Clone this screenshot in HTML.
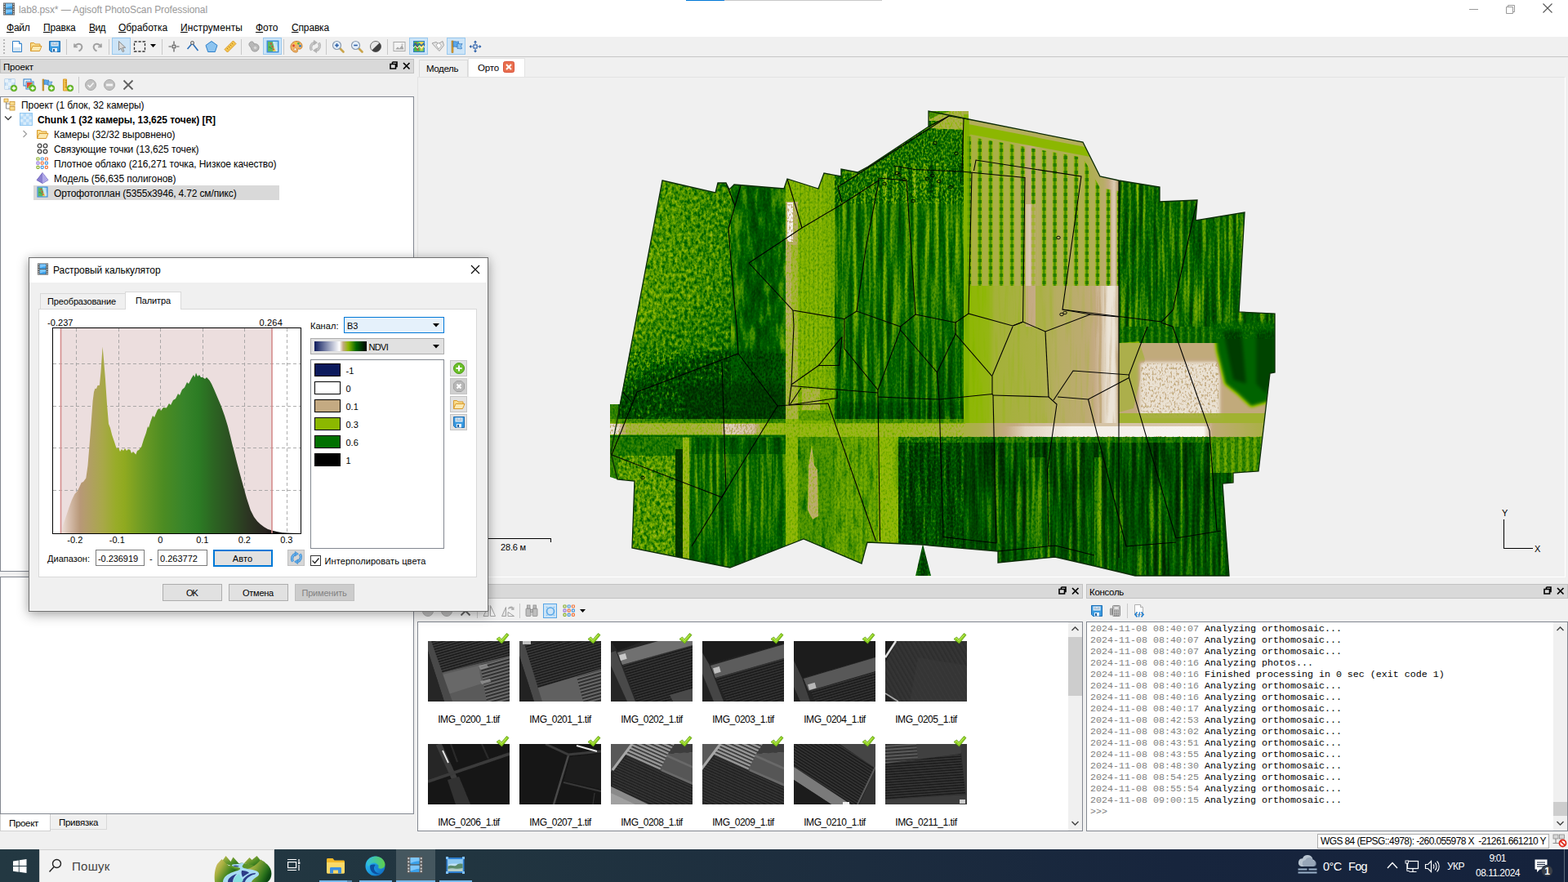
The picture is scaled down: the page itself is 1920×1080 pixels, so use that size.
<!DOCTYPE html>
<html lang="ru"><head><meta charset="utf-8"><title>Agisoft PhotoScan Professional</title><style>html,body{margin:0;padding:0}body{width:1920px;height:1080px;overflow:hidden;position:relative;background:#f0f0f0;font-family:"Liberation Sans",sans-serif;font-size:12px}
.t{position:absolute;white-space:pre;display:block}
svg{overflow:visible}</style></head><body>
<!-- chrome -->
<div style="position:absolute;left:0px;top:0px;width:1920px;height:23px;background:#fff"></div><div style="position:absolute;left:840px;top:0px;width:47px;height:1px;background:#0078d7"></div><div style="position:absolute;left:887px;top:0px;width:193px;height:1px;background:#c8c8c8"></div><svg style="position:absolute;left:3px;top:3px;" width="16" height="16" viewBox="0 0 16 16"><rect x="1" y="0.5" width="14" height="15" fill="#5a5a5a"/><rect x="4" y="1.5" width="8" height="6" fill="#3aa0ea"/><rect x="4" y="8.5" width="8" height="6" fill="#3aa0ea"/><path d="M4 1.5h8v3c-3 0-5 1-8 2z" fill="#8fd0ff" opacity=".8"/><path d="M4 8.5h8v3c-3 0-5 1-8 2z" fill="#8fd0ff" opacity=".8"/><g fill="#d0d0d0"><rect x="1.7" y="1.5" width="1.4" height="1.6"/><rect x="1.7" y="4.5" width="1.4" height="1.6"/><rect x="1.7" y="7.5" width="1.4" height="1.6"/><rect x="1.7" y="10.5" width="1.4" height="1.6"/><rect x="1.7" y="13" width="1.4" height="1.6"/><rect x="12.9" y="1.5" width="1.4" height="1.6"/><rect x="12.9" y="4.5" width="1.4" height="1.6"/><rect x="12.9" y="7.5" width="1.4" height="1.6"/><rect x="12.9" y="10.5" width="1.4" height="1.6"/><rect x="12.9" y="13" width="1.4" height="1.6"/></g></svg><span class="t" style="left:23.00px;top:5px;height:14px;line-height:14px;font-size:12px;color:#999;letter-spacing:-0.107px;">lab8.psx* — Agisoft PhotoScan Professional</span><svg style="position:absolute;left:1798px;top:4px;" width="14" height="14" viewBox="0 0 14 14"><path d="M1 7.5h11" stroke="#999" stroke-width="1"/></svg><svg style="position:absolute;left:1843px;top:4px;" width="14" height="14" viewBox="0 0 14 14"><path d="M1.5 4.5h8v8h-8zM3.5 4.5v-2h8v8h-2" fill="none" stroke="#999" stroke-width="1"/></svg><svg style="position:absolute;left:1888px;top:3px;" width="14" height="14" viewBox="0 0 14 14"><path d="M1.5 1.5l11 11M12.5 1.5l-11 11" stroke="#555" stroke-width="1.1" fill="none"/></svg><div style="position:absolute;left:0px;top:23px;width:1920px;height:22px;background:#fff"></div><span class="t" style="left:8.00px;top:27px;height:14px;line-height:14px;font-size:12px;color:#000;letter-spacing:-0.254px;"><u>Ф</u>айл</span><span class="t" style="left:53.00px;top:27px;height:14px;line-height:14px;font-size:12px;color:#000;letter-spacing:-0.174px;"><u>П</u>равка</span><span class="t" style="left:109.00px;top:27px;height:14px;line-height:14px;font-size:12px;color:#000;letter-spacing:-0.573px;"><u>В</u>ид</span><span class="t" style="left:145.00px;top:27px;height:14px;line-height:14px;font-size:12px;color:#000;letter-spacing:-0.059px;"><u>О</u>бработка</span><span class="t" style="left:221.00px;top:27px;height:14px;line-height:14px;font-size:12px;color:#000;letter-spacing:0.107px;"><u>И</u>нструменты</span><span class="t" style="left:313.00px;top:27px;height:14px;line-height:14px;font-size:12px;color:#000;letter-spacing:-0.020px;"><u>Ф</u>ото</span><span class="t" style="left:357.00px;top:27px;height:14px;line-height:14px;font-size:12px;color:#000;letter-spacing:-0.154px;"><u>С</u>правка</span><div style="position:absolute;left:0px;top:45px;width:1920px;height:25px;background:#f0f0f0;border-bottom:1px solid #c6c6c6;box-sizing:border-box"></div><svg style="position:absolute;left:3px;top:47px;" width="4" height="20" viewBox="0 0 4 20"><g fill="#b8b8b8"><rect x="1" y="1" width="2" height="2"/><rect x="1" y="5" width="2" height="2"/><rect x="1" y="9" width="2" height="2"/><rect x="1" y="13" width="2" height="2"/><rect x="1" y="17" width="2" height="2"/></g></svg><div style="position:absolute;left:137px;top:46px;width:23px;height:21px;background:#cce4f7;border:1px solid #99c9ef;box-sizing:border-box"></div><div style="position:absolute;left:322px;top:46px;width:23px;height:21px;background:#cce4f7;border:1px solid #99c9ef;box-sizing:border-box"></div><div style="position:absolute;left:501px;top:46px;width:23px;height:21px;background:#cce4f7;border:1px solid #99c9ef;box-sizing:border-box"></div><div style="position:absolute;left:547px;top:46px;width:23px;height:21px;background:#cce4f7;border:1px solid #99c9ef;box-sizing:border-box"></div><div style="position:absolute;left:81px;top:48px;width:1px;height:19px;background:#c8c8c8"></div><div style="position:absolute;left:133px;top:48px;width:1px;height:19px;background:#c8c8c8"></div><div style="position:absolute;left:198px;top:48px;width:1px;height:19px;background:#c8c8c8"></div><div style="position:absolute;left:295px;top:48px;width:1px;height:19px;background:#c8c8c8"></div><div style="position:absolute;left:347px;top:48px;width:1px;height:19px;background:#c8c8c8"></div><div style="position:absolute;left:399px;top:48px;width:1px;height:19px;background:#c8c8c8"></div><div style="position:absolute;left:474px;top:48px;width:1px;height:19px;background:#c8c8c8"></div><svg style="position:absolute;left:13px;top:49px;" width="16" height="16" viewBox="0 0 16 16"><path d="M2.5 1.5h8l3 3v10h-11z" fill="#fff" stroke="#2e7fc9"/><path d="M10.5 1.5v3h3" fill="#d6e9f8" stroke="#2e7fc9"/><rect x="3.5" y="9" width="9" height="5" fill="#cfe3f3"/></svg><svg style="position:absolute;left:36px;top:49px;" width="16" height="16" viewBox="0 0 16 16"><path d="M1.5 13.5v-10h4l1.5 1.5h6v2" fill="#f9dc8c" stroke="#d99a2b"/><path d="M1.5 13.5l2.5-6h11l-2.5 6z" fill="#fbe9b0" stroke="#d99a2b"/></svg><svg style="position:absolute;left:59px;top:49px;" width="16" height="16" viewBox="0 0 16 16"><path d="M1.5 1.5h13v13h-11l-2-2z" fill="#3b9be0" stroke="#1f6fb5"/><rect x="3.5" y="2.5" width="9" height="5" fill="#e8f2fb"/><path d="M4.5 4h3M8.5 4h3M4.5 5.7h7" stroke="#7a9bb8" stroke-width=".8"/><rect x="5" y="10" width="6" height="4.5" fill="#e8f2fb"/><rect x="6" y="11" width="2" height="3" fill="#2a5f94"/></svg><svg style="position:absolute;left:88px;top:49px;" width="16" height="16" viewBox="0 0 16 16"><path d="M3 4.5v4h4" fill="none" stroke="#a0a0a0" stroke-width="1.6"/><path d="M3.5 8C5 5 9 3.5 11.5 6c2 2.5 0.5 6-3 7.5" fill="none" stroke="#a0a0a0" stroke-width="2"/></svg><svg style="position:absolute;left:111px;top:49px;" width="16" height="16" viewBox="0 0 16 16"><path d="M13 4.5v4h-4" fill="none" stroke="#a0a0a0" stroke-width="1.6"/><path d="M12.5 8C11 5 7 3.5 4.5 6c-2 2.5-0.5 6 3 7.5" fill="none" stroke="#a0a0a0" stroke-width="2"/></svg><svg style="position:absolute;left:141px;top:49px;" width="16" height="16" viewBox="0 0 16 16"><path d="M4.5 1.5v11l2.7-2.5 2 4.5 1.8-.8-2-4.4h3.7z" fill="#d8d8d8" stroke="#8a8a8a" stroke-width="1"/></svg><svg style="position:absolute;left:163px;top:49px;" width="16" height="16" viewBox="0 0 16 16"><rect x="1.5" y="2" width="13" height="12" fill="none" stroke="#333" stroke-width="1.3" stroke-dasharray="3.2 1.8"/></svg><svg style="position:absolute;left:205px;top:49px;" width="16" height="16" viewBox="0 0 16 16"><path d="M8 1.5v4M8 10.5v4M1.5 8h4M10.5 8h4" stroke="#555" stroke-width="1.2"/><rect x="6.2" y="6.2" width="3.6" height="3.6" fill="#ddd" stroke="#555" stroke-width="1"/></svg><svg style="position:absolute;left:228px;top:49px;" width="16" height="16" viewBox="0 0 16 16"><path d="M1.5 11l6-7 7 9" fill="none" stroke="#2b6fb8" stroke-width="1.6"/><circle cx="7.5" cy="3.5" r="2" fill="#ddd" stroke="#555"/></svg><svg style="position:absolute;left:251px;top:49px;" width="16" height="16" viewBox="0 0 16 16"><path d="M8 1.5l7 5-2.7 8H3.7L1 6.5z" fill="#8cc4f0" stroke="#2e7fc9" stroke-width="1"/></svg><svg style="position:absolute;left:274px;top:49px;" width="16" height="16" viewBox="0 0 16 16"><path d="M1 11.5l10.5-10.5 3.5 3.5-10.5 10.5z" fill="#f5c64f" stroke="#d99a2b"/><path d="M4 10l1.3 1.3M6 8l1.3 1.3M8 6l1.3 1.3M10 4l1.3 1.3" stroke="#a06a10" stroke-width=".8"/></svg><svg style="position:absolute;left:303px;top:49px;" width="16" height="16" viewBox="0 0 16 16"><path d="M3 3c2-2 5-1 5 2 3-1 6 1 6 4s-2 5-5 5c-4 0-4-3-5-5-2-2-3-4-1-6z" fill="#b8b8b8" stroke="#9a9a9a"/><circle cx="9.5" cy="9.5" r="1.8" fill="#d8d8d8"/></svg><svg style="position:absolute;left:326px;top:49px;" width="16" height="16" viewBox="0 0 16 16"><rect x=".5" y=".5" width="15" height="15" fill="#3d8fdc"/><rect x="2" y="2" width="12" height="12" fill="#a8d8f0"/><path d="M2 2h6l3 12h-9z" fill="#5cb860"/><path d="M8 2h3l3 8v4h-3z" fill="#c8e6f4"/><path d="M9.500 8l2.500 6h-4z" fill="#e8d860"/><path d="M5.500 3.500l1 2.200M7 7l1 2.200M8.500 10.500l.8 2" stroke="#e0483a" stroke-width="1.700"/><path d="M3 9c1.500-1 2.500 0 3.500 2" stroke="#2e8f3a" stroke-width="1" fill="none"/></svg><svg style="position:absolute;left:355px;top:49px;" width="16" height="16" viewBox="0 0 16 16"><path d="M8 1.5c4.5 0 7 2.7 7 6 0 2.8-2 4-4 3.5-1.600-.4-2.300.6-1.700 1.800.6 1.400-.5 2.200-2 2.200-3.800 0-6.300-3-6.300-6.700S4 1.500 8 1.500z" fill="#f0b36a" stroke="#c9822f"/><circle cx="4.5" cy="7" r="1.400" fill="#e0402f"/><circle cx="7" cy="4" r="1.400" fill="#f3d230"/><circle cx="10.500" cy="4.300" r="1.400" fill="#4cb04a"/><circle cx="12.500" cy="7.300" r="1.400" fill="#2e7fc9"/><circle cx="6.500" cy="11.300" r="1.500" fill="#fff" stroke="#c9822f" stroke-width=".6"/></svg><svg style="position:absolute;left:378px;top:49px;" width="16" height="16" viewBox="0 0 16 16"><path d="M3.500 12.500C1.500 8.500 3 4.500 7 3.200" fill="none" stroke="#a8a8a8" stroke-width="3.200"/><path d="M3.500 12.500C1.500 8.500 3 4.500 7 3.200" fill="none" stroke="#c8c8c8" stroke-width="1.800"/><path d="M6.300 .300l4.200 2.900-4.200 2.900z" fill="#b4b4b4" stroke="#a8a8a8" stroke-width=".5"/><path d="M12.500 3.500C14.500 7.500 13 11.500 9 12.800" fill="none" stroke="#a8a8a8" stroke-width="3.200"/><path d="M12.500 3.500C14.500 7.500 13 11.500 9 12.800" fill="none" stroke="#c8c8c8" stroke-width="1.800"/><path d="M9.700 9.900l-4.200 2.900 4.200 2.900z" fill="#b4b4b4" stroke="#a8a8a8" stroke-width=".5"/></svg><svg style="position:absolute;left:406px;top:49px;" width="16" height="16" viewBox="0 0 16 16"><path d="M9.500 9.500l5 5" stroke="#c9a44a" stroke-width="2.600" stroke-linecap="round"/><circle cx="6.500" cy="6.500" r="5" fill="#e6f0fa" stroke="#8a9bb0" stroke-width="1.200"/><path d="M4.2 6.5h4.600" stroke="#2b5fa8" stroke-width="1.600"/><path d="M6.500 4.200v4.600" stroke="#2b5fa8" stroke-width="1.600"/></svg><svg style="position:absolute;left:429px;top:49px;" width="16" height="16" viewBox="0 0 16 16"><path d="M9.500 9.500l5 5" stroke="#c9a44a" stroke-width="2.600" stroke-linecap="round"/><circle cx="6.500" cy="6.500" r="5" fill="#e6f0fa" stroke="#8a9bb0" stroke-width="1.200"/><path d="M4.2 6.5h4.600" stroke="#2b5fa8" stroke-width="1.600"/></svg><svg style="position:absolute;left:452px;top:49px;" width="16" height="16" viewBox="0 0 16 16"><circle cx="8" cy="8" r="6.500" fill="#e8e8e8" stroke="#707070"/><path d="M12.600 3.400A6.500 6.500 0 0 1 3.400 12.600z" fill="#404040"/></svg><svg style="position:absolute;left:481px;top:49px;" width="16" height="16" viewBox="0 0 16 16"><rect x="1" y="2.500" width="14" height="11" fill="#f4f4f4" stroke="#a8a8a8"/><path d="M3 11.500l3-3 2 2 3.500-4.500 2 5.500z" fill="#a8a8a8"/><circle cx="11.500" cy="5.500" r="1.200" fill="#c8c8c8"/></svg><svg style="position:absolute;left:505px;top:49px;" width="16" height="16" viewBox="0 0 16 16"><rect x="1" y="1" width="14" height="14" fill="#2e7fc9"/><rect x="2.200" y="2.200" width="11.600" height="11.600" fill="#7ccf5a"/><path d="M2.200 2.200h4l3 11.600h-7z" fill="#4cb04a"/><path d="M8 2.200h5.800v6l-3 5.600z" fill="#f2d34f"/><path d="M4 3l3 10" stroke="#e0483a" stroke-width="1.300"/><path d="M1 7l2.500-2.500 2.500 2.500 2.500-2.500 2.500 2.500 2.500-2.500 1.500 1.500" fill="none" stroke="#1f5fa8" stroke-width="1.300"/><path d="M1 10l2.500-2.500 2.500 2.500 2.500-2.500 2.500 2.500 2.500-2.500 1.500 1.500" fill="none" stroke="#fff" stroke-width="1"/></svg><svg style="position:absolute;left:528px;top:49px;" width="16" height="16" viewBox="0 0 16 16"><path d="M1 4l5-1.500 3 2 5-3 1.500 5-5.500 7-4-4z" fill="#e4e4e4" stroke="#a0a0a0"/><path d="M6 6l3.500-2.500 3 3.500-3.500 4z" fill="#fff" stroke="#a0a0a0" stroke-width=".8"/></svg><svg style="position:absolute;left:551px;top:49px;" width="16" height="16" viewBox="0 0 16 16"><rect x="2" y="1" width="2" height="14.500" fill="#d9a23a" stroke="#a87416" stroke-width=".6"/><path d="M4 2c2-1.200 4 1 6.500-.2v6.400C8 9.400 6 7.200 4 8.400z" fill="#5aa8ea" stroke="#2b6fb8" stroke-width=".7"/><path d="M9 4.500c2-.6 3.500 1 6 0l-1.500 3 1 3c-2.500 1-3.500-.6-5.500 0z" fill="#8cc4f0" stroke="#2b6fb8" stroke-width=".7"/></svg><svg style="position:absolute;left:574px;top:49px;" width="16" height="16" viewBox="0 0 16 16"><rect x="6" y="6" width="4" height="4" fill="#fff" stroke="#2b5fa8" stroke-width="1.200"/><path d="M8 0.500l2 2.500h-4zM8 15.500l2-2.500h-4zM0.500 8l2.500-2v4zM15.500 8l-2.500-2v4z" fill="#2b5fa8"/><path d="M8 3v2M8 11v2M3 8h2M11 8h2" stroke="#2b5fa8" stroke-width="1.200"/></svg><svg style="position:absolute;left:184px;top:54px;" width="8" height="5" viewBox="0 0 8 5"><path d="M0 0h7l-3.500 4z" fill="#000"/></svg><div style="position:absolute;left:0px;top:72px;width:507px;height:18px;background:#d9d9d9;border:1px solid #c2c2c2;box-sizing:border-box"></div><span class="t" style="left:4.00px;top:76px;height:12px;line-height:12px;font-size:11.5px;color:#000;letter-spacing:-0.148px;">Проект</span><svg style="position:absolute;left:477px;top:75px;" width="10" height="10" viewBox="0 0 10 10"><path d="M3.5 1H9v5.5H7.5M3.5 1v2M1 3.5h6.5V9H1z" fill="none" stroke="#000" stroke-width="1.6"/></svg><svg style="position:absolute;left:493px;top:76px;" width="10" height="10" viewBox="0 0 10 10"><path d="M1 1l7.5 7.5M8.5 1L1 8.5" stroke="#000" stroke-width="1.7" fill="none"/></svg><svg style="position:absolute;left:5px;top:96px;" width="16" height="16" viewBox="0 0 16 16"><rect x="1" y="1" width="12" height="12" fill="#cfe4f6" stroke="#7fb2e0" stroke-width=".8"/><path d="M1 1h4v4h-4zM9 1h4v4h-4zM5 5h4v4h-4zM1 9h4v4h-4zM9 9h4v4h-4z" fill="#e9f3fb" opacity=".9"/><circle cx="12" cy="12" r="3.800" fill="#6bbf2a" stroke="#4a9a12" stroke-width=".7"/><path d="M12 9.700v4.600M9.700 12h4.600" stroke="#fff" stroke-width="1.300"/></svg><svg style="position:absolute;left:28px;top:96px;" width="16" height="16" viewBox="0 0 16 16"><rect x="1" y="1" width="9" height="8" fill="#e8f2fb" stroke="#2e7fc9"/><rect x="4" y="4" width="9" height="9" fill="#fff" stroke="#2e7fc9"/><rect x="5" y="5" width="7" height="7" fill="#e0483a"/><path d="M5 12l7-7v7z" fill="#7ccf5a"/><circle cx="12" cy="12" r="3.800" fill="#6bbf2a" stroke="#4a9a12" stroke-width=".7"/><path d="M12 9.700v4.600M9.700 12h4.600" stroke="#fff" stroke-width="1.300"/></svg><svg style="position:absolute;left:51px;top:96px;" width="16" height="16" viewBox="0 0 16 16"><rect x="1" y="1" width="1.800" height="14" fill="#d9a23a" stroke="#a87416" stroke-width=".5"/><path d="M3 2c2-1 3.500 1 5.500 0v5.500c-2 1-3.500-1-5.500 0z" fill="#5aa8ea" stroke="#2b6fb8" stroke-width=".6"/><path d="M8 4c1.500-.5 3 .8 5 0l-1.200 2.500.8 2.500c-2 .8-3-.4-4.600 0z" fill="#8cc4f0" stroke="#2b6fb8" stroke-width=".6"/><circle cx="12" cy="12" r="3.800" fill="#6bbf2a" stroke="#4a9a12" stroke-width=".7"/><path d="M12 9.700v4.600M9.700 12h4.600" stroke="#fff" stroke-width="1.300"/></svg><svg style="position:absolute;left:74px;top:96px;" width="16" height="16" viewBox="0 0 16 16"><path d="M3.500 1h4v11h6v3h-10z" fill="#f5c64f" stroke="#d99a2b"/><path d="M5.500 3h2M5.500 5.500h2M5.500 8h2M5.500 10.500h2" stroke="#a06a10" stroke-width=".8"/><circle cx="12" cy="12" r="3.800" fill="#6bbf2a" stroke="#4a9a12" stroke-width=".7"/><path d="M12 9.700v4.600M9.700 12h4.600" stroke="#fff" stroke-width="1.300"/></svg><div style="position:absolute;left:96px;top:94px;width:1px;height:20px;background:#c8c8c8"></div><svg style="position:absolute;left:103px;top:96px;" width="16" height="16" viewBox="0 0 16 16"><circle cx="8" cy="8" r="6.500" fill="#c0c0c0" stroke="#a8a8a8"/><path d="M4.500 8l2.500 2.500 4.500-5" fill="none" stroke="#f4f4f4" stroke-width="1.600"/></svg><svg style="position:absolute;left:126px;top:96px;" width="16" height="16" viewBox="0 0 16 16"><circle cx="8" cy="8" r="6.500" fill="#c0c0c0" stroke="#a8a8a8"/><rect x="4" y="6.600" width="8" height="2.800" fill="#f4f4f4"/></svg><svg style="position:absolute;left:149px;top:96px;" width="16" height="16" viewBox="0 0 16 16"><path d="M2.500 2.500l11 11M13.500 2.500l-11 11" stroke="#606060" stroke-width="1.800"/></svg><div style="position:absolute;left:0px;top:118px;width:507px;height:582px;background:#fff;border:1px solid #828790;box-sizing:border-box"></div><div style="position:absolute;left:41px;top:227px;width:301px;height:18px;background:#d9d9d9"></div><span class="t" style="left:26.00px;top:122px;height:14px;line-height:14px;font-size:12px;color:#000;letter-spacing:-0.058px;">Проект (1 блок, 32 камеры)</span><span class="t" style="left:46.00px;top:140px;height:14px;line-height:14px;font-size:12px;color:#000;font-weight:700;letter-spacing:-0.061px;">Chunk 1 (32 камеры, 13,625 точек) [R]</span><span class="t" style="left:66.00px;top:158px;height:14px;line-height:14px;font-size:12px;color:#000;letter-spacing:-0.059px;">Камеры (32/32 выровнено)</span><span class="t" style="left:66.00px;top:176px;height:14px;line-height:14px;font-size:12px;color:#000;letter-spacing:-0.072px;">Связующие точки (13,625 точек)</span><span class="t" style="left:66.00px;top:194px;height:14px;line-height:14px;font-size:12px;color:#000;letter-spacing:-0.092px;">Плотное облако (216,271 точка, Низкое качество)</span><span class="t" style="left:66.00px;top:212px;height:14px;line-height:14px;font-size:12px;color:#000;letter-spacing:-0.081px;">Модель (56,635 полигонов)</span><span class="t" style="left:66.00px;top:230px;height:14px;line-height:14px;font-size:12px;color:#000;letter-spacing:-0.149px;">Ортофотоплан (5355x3946, 4.72 см/пикс)</span><svg style="position:absolute;left:4px;top:120px;" width="16" height="16" viewBox="0 0 16 16"><rect x="1" y="1" width="5" height="4" fill="#f9dc8c" stroke="#c9922b" stroke-width=".8"/><rect x="8" y="4.500" width="6" height="4.500" fill="#f9dc8c" stroke="#c9922b" stroke-width=".8"/><rect x="8" y="10.500" width="6" height="4.500" fill="#f9dc8c" stroke="#c9922b" stroke-width=".8"/><path d="M3.500 5v8h4.500M3.500 7h4.500" fill="none" stroke="#808080" stroke-width=".9"/></svg><svg style="position:absolute;left:5px;top:141px;" width="10" height="8" viewBox="0 0 10 8"><path d="M1 1.500l4 4 4-4" fill="none" stroke="#404040" stroke-width="1.400"/></svg><svg style="position:absolute;left:24px;top:138px;" width="16" height="16" viewBox="0 0 16 16"><rect x=".5" y=".5" width="15" height="15" fill="#b4daf8" stroke="#8cc4f0" stroke-width=".9"/><path d="M1 1h3.500v3.500h-3.500zM8 1h3.500v3.500h-3.500zM4.500 4.500h3.500v3.500h-3.500zM11.500 4.500h3.500v3.500h-3.500zM1 8h3.500v3.500h-3.500zM8 8h3.500v3.500h-3.500zM4.500 11.500h3.500v3.500h-3.500zM11.500 11.500h3.500v3.500h-3.500z" fill="#d8ecfb"/></svg><svg style="position:absolute;left:27px;top:159px;" width="8" height="10" viewBox="0 0 8 10"><path d="M1.500 1l4 4-4 4" fill="none" stroke="#a0a0a0" stroke-width="1.300"/></svg><svg style="position:absolute;left:44px;top:156px;" width="16" height="16" viewBox="0 0 16 16"><path d="M1.5 13.5v-10h4l1.5 1.5h6v2" fill="#f9dc8c" stroke="#d99a2b"/><path d="M1.5 13.5l2.5-6h11l-2.5 6z" fill="#fbe9b0" stroke="#d99a2b"/></svg><svg style="position:absolute;left:44px;top:174px;" width="16" height="16" viewBox="0 0 16 16"><g fill="none" stroke="#444" stroke-width="1.300"><circle cx="4.500" cy="4.500" r="2.300"/><circle cx="11.500" cy="4.500" r="2.300"/><circle cx="4.500" cy="11.500" r="2.300"/><circle cx="11.500" cy="11.500" r="2.300"/></g></svg><svg style="position:absolute;left:44px;top:192px;" width="16" height="16" viewBox="0 0 16 16"><rect x="1.0" y="1.0" width="3" height="3" rx=".8" fill="none" stroke="#8ab030" stroke-width="1.200"/><rect x="6.2" y="1.0" width="3" height="3" rx=".8" fill="none" stroke="#4a9ae0" stroke-width="1.200"/><rect x="11.4" y="1.0" width="3" height="3" rx=".8" fill="none" stroke="#f07840" stroke-width="1.200"/><rect x="1.0" y="6.2" width="3" height="3" rx=".8" fill="none" stroke="#9a7ae0" stroke-width="1.200"/><rect x="6.2" y="6.2" width="3" height="3" rx=".8" fill="none" stroke="#f07840" stroke-width="1.200"/><rect x="11.4" y="6.2" width="3" height="3" rx=".8" fill="none" stroke="#4a9ae0" stroke-width="1.200"/><rect x="1.0" y="11.4" width="3" height="3" rx=".8" fill="none" stroke="#8ab030" stroke-width="1.200"/><rect x="6.2" y="11.4" width="3" height="3" rx=".8" fill="none" stroke="#4a9ae0" stroke-width="1.200"/><rect x="11.4" y="11.4" width="3" height="3" rx=".8" fill="none" stroke="#f07840" stroke-width="1.200"/></svg><svg style="position:absolute;left:44px;top:210px;" width="16" height="16" viewBox="0 0 16 16"><path d="M8 1.500l7 9-7 4-7-4z" fill="#8a7fd0" stroke="#5a4fb0" stroke-width=".7"/><path d="M8 1.500v13l7-4z" fill="#b0a8e8"/></svg><svg style="position:absolute;left:45px;top:228px;" width="14" height="14" viewBox="0 0 16 16"><rect x=".5" y=".5" width="15" height="15" fill="#3d8fdc"/><rect x="2" y="2" width="12" height="12" fill="#a8d8f0"/><path d="M2 2h6l3 12h-9z" fill="#5cb860"/><path d="M8 2h3l3 8v4h-3z" fill="#c8e6f4"/><path d="M9.500 8l2.500 6h-4z" fill="#e8d860"/><path d="M5.500 3.500l1 2.200M7 7l1 2.200M8.500 10.500l.8 2" stroke="#e0483a" stroke-width="1.700"/><path d="M3 9c1.500-1 2.500 0 3.500 2" stroke="#2e8f3a" stroke-width="1" fill="none"/></svg><div style="position:absolute;left:0px;top:706px;width:507px;height:291px;background:#fff;border:1px solid #828790;box-sizing:border-box"></div><div style="position:absolute;left:0px;top:997px;width:62px;height:21px;background:#fff;border:1px solid #d0d0d0;border-top:none;box-sizing:border-box"></div><div style="position:absolute;left:62px;top:997px;width:69px;height:19px;background:#f0f0f0;border:1px solid #d9d9d9;border-top:none;border-left:none;box-sizing:border-box"></div><span class="t" style="left:11.00px;top:1002px;height:12px;line-height:12px;font-size:11.5px;color:#000;letter-spacing:-0.315px;">Проект</span><span class="t" style="left:72.00px;top:1001px;height:12px;line-height:12px;font-size:11.5px;color:#000;letter-spacing:-0.281px;">Привязка</span><div style="position:absolute;left:513px;top:73px;width:60px;height:21px;background:#f0f0f0;border:1px solid #d9d9d9;border-bottom:none;box-sizing:border-box"></div><div style="position:absolute;left:573px;top:71px;width:70px;height:24px;background:#fff;border:1px solid #e3e3e3;border-bottom:none;box-sizing:border-box"></div><span class="t" style="left:522.00px;top:78px;height:12px;line-height:12px;font-size:11.5px;color:#000;letter-spacing:-0.380px;">Модель</span><span class="t" style="left:585.00px;top:77px;height:12px;line-height:12px;font-size:11.5px;color:#000;letter-spacing:-0.156px;">Орто</span><svg style="position:absolute;left:616px;top:75px;" width="14" height="14" viewBox="0 0 14 14"><rect x="0.5" y="0.5" width="13" height="13" rx="2" fill="#e8704f" stroke="#d9503a"/><path d="M4 4l6 6M10 4l-6 6" stroke="#fff" stroke-width="2"/></svg><div style="position:absolute;left:511px;top:94px;width:1406px;height:613px;background:#f0f0f0;border:1px solid #fff;border-top-color:#e3e3e3;border-left-color:#e3e3e3;box-sizing:border-box"></div><div style="position:absolute;left:511px;top:715px;width:815px;height:18px;background:#d9d9d9;border:1px solid #c2c2c2;box-sizing:border-box"></div><svg style="position:absolute;left:1296px;top:718px;" width="10" height="10" viewBox="0 0 10 10"><path d="M3.5 1H9v5.5H7.5M3.5 1v2M1 3.5h6.5V9H1z" fill="none" stroke="#000" stroke-width="1.6"/></svg><svg style="position:absolute;left:1312px;top:719px;" width="10" height="10" viewBox="0 0 10 10"><path d="M1 1l7.5 7.5M8.5 1L1 8.5" stroke="#000" stroke-width="1.7" fill="none"/></svg><div style="position:absolute;left:511px;top:761px;width:815px;height:257px;background:#fff;border:1px solid #828790;box-sizing:border-box"></div><div style="position:absolute;left:1330px;top:715px;width:590px;height:18px;background:#d9d9d9;border:1px solid #c2c2c2;box-sizing:border-box"></div><span class="t" style="left:1334.00px;top:719px;height:12px;line-height:12px;font-size:11.5px;color:#000;letter-spacing:-0.310px;">Консоль</span><svg style="position:absolute;left:1890px;top:718px;" width="10" height="10" viewBox="0 0 10 10"><path d="M3.5 1H9v5.5H7.5M3.5 1v2M1 3.5h6.5V9H1z" fill="none" stroke="#000" stroke-width="1.6"/></svg><svg style="position:absolute;left:1906px;top:719px;" width="10" height="10" viewBox="0 0 10 10"><path d="M1 1l7.5 7.5M8.5 1L1 8.5" stroke="#000" stroke-width="1.7" fill="none"/></svg><div style="position:absolute;left:1330px;top:761px;width:590px;height:257px;background:#fff;border:1px solid #828790;box-sizing:border-box"></div><div style="position:absolute;left:1613px;top:1021px;width:284px;height:18px;background:#fff;border:1px solid #adadad;box-sizing:border-box"></div><span class="t" style="left:1617.00px;top:1023px;height:14px;line-height:14px;font-size:12px;color:#000;letter-spacing:-0.614px;white-space:pre;">WGS 84 (EPSG::4978): -260.055978 X  -21261.661210 Y</span>
<!-- mosaic -->
<svg style="position:absolute;left:740px;top:130px" width="840" height="575" viewBox="740 130 840 575"><defs><clipPath id="mo"><polygon points="811,221 876,236 879,224 889,224 893,232 899,226 960,231 964,219 1002,231 1009,212 1030,216 1030,207 1050,211 1063,204 1137,155 1137,136 1186,136 1186,146 1326,174 1347,216 1370,221 1420,229 1420,247 1466,245 1464,270 1524,260 1517,382 1561,384 1561,456 1555,457 1541,577 1510,579 1510,591 1497,592 1501,650 1505,705 1390,705 1340,693 1292,682 1222,689 1222,675 1140,668 1131,667 1062,664 1055,690 984,660 894,695 774,671 777,589 756,587 747,584 747,495 759,495"/><polygon points="1130,666 1121,705 1140,705"/></clipPath><filter id="cmap" filterUnits="userSpaceOnUse" x="740" y="130" width="840" height="580" color-interpolation-filters="sRGB"><feComponentTransfer><feFuncR type="table" tableValues="1.000 0.769 0.659 0.549 0.365 0.184 0.000 0.000 0.000 0.000 0.000"/><feFuncG type="table" tableValues="1.000 0.667 0.694 0.722 0.612 0.502 0.392 0.294 0.196 0.098 0.000"/><feFuncB type="table" tableValues="1.000 0.510 0.255 0.000 0.000 0.000 0.000 0.000 0.000 0.000 0.000"/></feComponentTransfer></filter><filter id="nbD" x="0" y="0" width="100%" height="100%" color-interpolation-filters="sRGB"><feTurbulence type="fractalNoise" baseFrequency="0.26 0.2" numOctaves="3" seed="3"/><feColorMatrix type="matrix" values="0 0 0 0 1  0 0 0 0 1  0 0 0 0 1  3 0 0 0 -1.5"/></filter><filter id="nbL" x="0" y="0" width="100%" height="100%" color-interpolation-filters="sRGB"><feTurbulence type="fractalNoise" baseFrequency="0.26 0.2" numOctaves="3" seed="3"/><feColorMatrix type="matrix" values="0 0 0 0 0  0 0 0 0 0  0 0 0 0 0  -3 0 0 0 1.5"/></filter><filter id="nfD" x="0" y="0" width="100%" height="100%" color-interpolation-filters="sRGB"><feTurbulence type="fractalNoise" baseFrequency="0.45 0.3" numOctaves="2" seed="11"/><feColorMatrix type="matrix" values="0 0 0 0 1  0 0 0 0 1  0 0 0 0 1  0 2.6 0 0 -1.3"/></filter><filter id="nfL" x="0" y="0" width="100%" height="100%" color-interpolation-filters="sRGB"><feTurbulence type="fractalNoise" baseFrequency="0.45 0.3" numOctaves="2" seed="11"/><feColorMatrix type="matrix" values="0 0 0 0 0  0 0 0 0 0  0 0 0 0 0  0 -2.6 0 0 1.3"/></filter><filter id="nsD" x="0" y="0" width="100%" height="100%" color-interpolation-filters="sRGB"><feTurbulence type="fractalNoise" baseFrequency="0.22 0.012" numOctaves="2" seed="5"/><feColorMatrix type="matrix" values="0 0 0 0 1  0 0 0 0 1  0 0 0 0 1  3.4 0 0 0 -1.7"/></filter><filter id="nsL" x="0" y="0" width="100%" height="100%" color-interpolation-filters="sRGB"><feTurbulence type="fractalNoise" baseFrequency="0.22 0.012" numOctaves="2" seed="5"/><feColorMatrix type="matrix" values="0 0 0 0 0  0 0 0 0 0  0 0 0 0 0  -3.4 0 0 0 1.7"/></filter><filter id="nrD" x="0" y="0" width="100%" height="100%" color-interpolation-filters="sRGB"><feTurbulence type="fractalNoise" baseFrequency="0.16 0.035" numOctaves="2" seed="9"/><feColorMatrix type="matrix" values="0 0 0 0 1  0 0 0 0 1  0 0 0 0 1  0 0 3.4 0 -1.7"/></filter><filter id="nrL" x="0" y="0" width="100%" height="100%" color-interpolation-filters="sRGB"><feTurbulence type="fractalNoise" baseFrequency="0.16 0.035" numOctaves="2" seed="9"/><feColorMatrix type="matrix" values="0 0 0 0 0  0 0 0 0 0  0 0 0 0 0  0 0 -3.4 0 1.7"/></filter><filter id="bl5" x="-20%" y="-20%" width="140%" height="140%" color-interpolation-filters="sRGB"><feGaussianBlur stdDeviation="5"/></filter><filter id="bl2" x="-20%" y="-20%" width="140%" height="140%" color-interpolation-filters="sRGB"><feGaussianBlur stdDeviation="2"/></filter><pattern id="st12" width="12.500" height="8" patternUnits="userSpaceOnUse"><rect x="0" y="0" width="5.500" height="8" fill="#fff" opacity=".16"/><rect x="7" y="0" width="3.500" height="8" fill="#000" opacity=".13"/></pattern><pattern id="st9" width="9" height="8" patternUnits="userSpaceOnUse"><rect x="0" y="0" width="4" height="8" fill="#fff" opacity=".14"/><rect x="5.500" y="0" width="2" height="8" fill="#000" opacity=".16"/></pattern><pattern id="st5" width="5.500" height="8" patternUnits="userSpaceOnUse"><rect x="0" y="0" width="2" height="8" fill="#fff" opacity=".08"/></pattern><pattern id="rows" x="1181.500" width="13.100" height="9" patternUnits="userSpaceOnUse"><rect x="2.500" y="0" width="5.500" height="9" fill="#5c5c5c" opacity=".5"/><rect x="3.700" y="0" width="3" height="9" fill="#757575" opacity=".9"/><rect x="3.200" y="2" width="4.200" height="4" fill="#858585"/></pattern><linearGradient id="gA" x1="0" y1="0" x2="1" y2="0"><stop offset="0" stop-color="#4c4c4c"/><stop offset="0.2" stop-color="#666666"/><stop offset="0.5" stop-color="#707070"/><stop offset="0.8" stop-color="#787878"/><stop offset="1" stop-color="#808080"/></linearGradient><linearGradient id="gB" x1="0" y1="0" x2="1" y2="0"><stop offset="0" stop-color="#858585"/><stop offset="0.35" stop-color="#a8a8a8"/><stop offset="0.6" stop-color="#b2b2b2"/><stop offset="0.85" stop-color="#999999"/><stop offset="1" stop-color="#858585"/></linearGradient><linearGradient id="gE" x1="0" y1="0" x2="1" y2="0"><stop offset="0" stop-color="#4c4c4c"/><stop offset="0.035" stop-color="#454545"/><stop offset="0.05" stop-color="#333333"/><stop offset="0.3" stop-color="#303030"/><stop offset="0.37" stop-color="#292929"/><stop offset="0.43" stop-color="#1a1a1a"/><stop offset="0.5" stop-color="#2b2b2b"/><stop offset="0.8" stop-color="#2e2e2e"/><stop offset="0.9" stop-color="#242424"/><stop offset="0.97" stop-color="#0f0f0f"/><stop offset="1" stop-color="#1f1f1f"/></linearGradient><linearGradient id="gE2" x1="0" y1="0" x2="1" y2="0"><stop offset="0" stop-color="#4c4c4c"/><stop offset="0.16" stop-color="#454545"/><stop offset="0.2" stop-color="#363636"/><stop offset="0.5" stop-color="#303030"/><stop offset="0.6" stop-color="#262626"/><stop offset="0.8" stop-color="#1f1f1f"/><stop offset="0.88" stop-color="#141414"/><stop offset="0.93" stop-color="#080808"/><stop offset="0.97" stop-color="#080808"/><stop offset="1" stop-color="#171717"/></linearGradient><linearGradient id="gRoad" x1="0" y1="0" x2="1" y2="0"><stop offset="0" stop-color="#080808"/><stop offset="0.015" stop-color="#0a0a0a"/><stop offset="0.03" stop-color="#333333"/><stop offset="0.1" stop-color="#383838"/><stop offset="0.17" stop-color="#333333"/><stop offset="0.175" stop-color="#0f0f0f"/><stop offset="0.22" stop-color="#141414"/><stop offset="0.235" stop-color="#424242"/><stop offset="0.3" stop-color="#474747"/><stop offset="0.45" stop-color="#404040"/><stop offset="0.56" stop-color="#2e2e2e"/><stop offset="0.6" stop-color="#1a1a1a"/><stop offset="0.63" stop-color="#0d0d0d"/><stop offset="0.7" stop-color="#050505"/><stop offset="0.9" stop-color="#030303"/><stop offset="0.915" stop-color="#1f1f1f"/><stop offset="1" stop-color="#333333"/></linearGradient><linearGradient id="fadeD" x1="0" x2="0" y1="0" y2="1"><stop offset="0" stop-color="#fff" stop-opacity="0"/><stop offset="1" stop-color="#fff" stop-opacity=".22"/></linearGradient></defs><g clip-path="url(#mo)" filter="url(#cmap)"><rect x="740" y="130" width="840" height="580" fill="#808080" /><rect x="745" y="215" width="152" height="305" fill="url(#gA)" /><polygon points="745,505 765,470 800,452 905,425 970,425 970,525 745,525" fill="#b8b8b8" filter="url(#bl5)"/><polygon points="765,420 800,390 905,350 905,430 800,455 762,470" fill="url(#fadeD)" /><rect x="745" y="215" width="152" height="305" fill="#fff" filter="url(#nbD)" opacity=".4"/><rect x="745" y="215" width="152" height="305" fill="#000" filter="url(#nbL)" opacity=".42"/><rect x="895" y="215" width="68" height="305" fill="url(#gB)" /><rect x="895" y="215" width="68" height="305" fill="#fff" filter="url(#nrD)" opacity=".3"/><rect x="895" y="215" width="68" height="305" fill="#000" filter="url(#nrL)" opacity=".3"/><rect x="895" y="430" width="68" height="88" fill="#bdbdbd" opacity=".6" filter="url(#bl2)"/><polygon points="770,470 800,455 962,430 962,518 755,518" fill="#fff" filter="url(#nfD)" opacity=".5"/><rect x="835" y="470" width="130" height="50" fill="#d6d6d6" opacity=".55" filter="url(#bl5)"/><rect x="962" y="215" width="15" height="305" fill="#262626" /><rect x="964" y="248" width="7" height="48" fill="#050505" /><rect x="962" y="215" width="15" height="32" fill="#525252" /><rect x="969" y="300" width="8" height="215" fill="#383838" /><rect x="962" y="400" width="15" height="118" fill="#333333" /><rect x="977" y="205" width="46" height="315" fill="#4f4f4f" /><rect x="977" y="205" width="46" height="315" fill="url(#st5)" /><rect x="1010" y="205" width="14" height="315" fill="#5c5c5c" opacity=".6"/><rect x="1022" y="130" width="165" height="390" fill="#858585" /><rect x="1022" y="300" width="160" height="220" fill="url(#fadeD)" /><rect x="1022" y="492" width="160" height="24" fill="#cccccc" opacity=".5" filter="url(#bl2)"/><rect x="1022" y="130" width="165" height="390" fill="url(#st12)" /><rect x="1022" y="130" width="165" height="390" fill="#fff" filter="url(#nsD)" opacity=".35"/><rect x="1022" y="130" width="165" height="390" fill="#000" filter="url(#nsL)" opacity=".35"/><polygon points="1022,232 1162,140 1186,140 1186,200 1100,200 1030,250" fill="#8f8f8f" /><polygon points="1022,232 1162,140 1186,140 1186,200 1100,200 1030,250" fill="#fff" filter="url(#nfD)" opacity=".45"/><polygon points="1022,232 1162,140 1186,140 1186,200 1100,200 1030,250" fill="#000" filter="url(#nfL)" opacity=".4"/><polygon points="1137,157 1162,141 1181,144 1181,159" fill="#333333" /><rect x="1137" y="136" width="49" height="12" fill="#333333" /><polygon points="1137,136 1165,136 1150,140 1139,146" fill="#737373" /><rect x="1180" y="140" width="190" height="380" fill="url(#gE)" /><polygon points="1180,166 1326,193 1347,230 1370,234 1370,350 1180,350" fill="url(#rows)" /><polygon points="1180,140 1186,146 1326,174 1335,192 1180,163" fill="#4c4c4c" /><polygon points="1186,146 1326,174 1329,180 1186,152" fill="#292929" /><rect x="1180" y="350" width="190" height="170" fill="url(#gE2)" /><rect x="1180" y="140" width="7" height="380" fill="#545454" opacity=".7"/><rect x="1256" y="250" width="12" height="150" fill="#0a0a0a" opacity=".6"/><rect x="1180" y="350" width="190" height="170" fill="#fff" filter="url(#nsD)" opacity=".04"/><rect x="1370" y="215" width="195" height="215" fill="#999999" /><rect x="1370" y="215" width="195" height="215" fill="url(#st9)" /><rect x="1370" y="215" width="195" height="215" fill="#fff" filter="url(#nsD)" opacity=".35"/><rect x="1370" y="215" width="195" height="215" fill="#000" filter="url(#nsL)" opacity=".4"/><rect x="1370" y="415" width="195" height="105" fill="#1c1c1c" /><rect x="1370" y="400" width="195" height="20" fill="#949494" /><rect x="1370" y="400" width="195" height="20" fill="url(#st9)" /><polygon points="1370,420 1395,418 1402,440 1388,500 1370,505" fill="#383838" opacity=".7"/><rect x="1395" y="443" width="99" height="69" fill="#090909" filter="url(#bl2)"/><rect x="1397" y="445" width="95" height="65" fill="#fff" filter="url(#nfD)" opacity=".12"/><polygon points="1486,395 1565,395 1565,456 1553,492 1532,498 1515,482 1500,470 1490,430" fill="#999999" filter="url(#bl2)"/><polygon points="1498,405 1520,405 1526,470 1510,465" fill="#cccccc" opacity=".8" filter="url(#bl2)"/><polygon points="1538,405 1561,405 1561,456 1550,482 1538,470" fill="#c2c2c2" opacity=".8" filter="url(#bl2)"/><rect x="1370" y="506" width="180" height="12" fill="#4c4c4c" opacity=".6"/><rect x="745" y="533" width="83" height="180" fill="#6b6b6b" /><rect x="745" y="533" width="83" height="180" fill="#fff" filter="url(#nbD)" opacity=".4"/><rect x="745" y="533" width="83" height="180" fill="#000" filter="url(#nbL)" opacity=".45"/><rect x="745" y="536" width="83" height="22" fill="#9e9e9e" opacity=".6"/><rect x="827" y="550" width="9" height="160" fill="#cccccc" /><rect x="836" y="533" width="8" height="180" fill="#454545" /><rect x="844" y="533" width="120" height="180" fill="#8c8c8c" /><rect x="844" y="540" width="120" height="175" fill="url(#st9)" /><rect x="844" y="600" width="120" height="110" fill="url(#fadeD)" /><rect x="844" y="536" width="120" height="20" fill="#b8b8b8" opacity=".6"/><rect x="844" y="533" width="120" height="180" fill="#fff" filter="url(#nsD)" opacity=".3"/><rect x="844" y="533" width="120" height="180" fill="#000" filter="url(#nsL)" opacity=".3"/><rect x="962" y="533" width="16" height="180" fill="#4c4c4c" /><rect x="977" y="533" width="46" height="180" fill="#6e6e6e" /><rect x="977" y="533" width="46" height="180" fill="#fff" filter="url(#nrD)" opacity=".25"/><polygon points="990,570 994,545 997,570 1001,575 1002,632 995,636 989,625" fill="#242424" /><rect x="1022" y="533" width="55" height="180" fill="#5c5c5c" /><rect x="1022" y="533" width="55" height="180" fill="url(#st5)" /><rect x="1022" y="533" width="55" height="180" fill="#fff" filter="url(#nrD)" opacity=".2"/><rect x="1075" y="533" width="26" height="180" fill="#4c4c4c" /><rect x="1100" y="533" width="120" height="180" fill="#b8b8b8" /><rect x="1100" y="533" width="120" height="180" fill="url(#st9)" opacity=".6"/><rect x="1218" y="533" width="290" height="180" fill="#adadad" /><rect x="1100" y="540" width="390" height="60" fill="#cccccc" opacity=".45" filter="url(#bl5)"/><rect x="1218" y="533" width="290" height="180" fill="url(#st9)" /><rect x="1218" y="533" width="290" height="180" fill="url(#st12)" /><rect x="1258" y="560" width="22" height="150" fill="#737373" opacity=".6"/><rect x="1340" y="560" width="9" height="150" fill="#545454" opacity=".6"/><rect x="1100" y="533" width="410" height="180" fill="#fff" filter="url(#nsD)" opacity=".4"/><rect x="1100" y="533" width="410" height="180" fill="#000" filter="url(#nsL)" opacity=".28"/><rect x="1482" y="534" width="70" height="45" fill="#6b6b6b" /><rect x="1482" y="534" width="70" height="45" fill="url(#st9)" /><rect x="1100" y="533" width="410" height="9" fill="#737373" opacity=".6"/><rect x="745" y="495" width="12" height="92" fill="#808080" /><rect x="745" y="518" width="810" height="17" fill="url(#gRoad)" /><rect x="745" y="532.5" width="217" height="3" fill="#999999" /><rect x="745" y="513" width="437" height="6" fill="#575757" opacity=".65"/><rect x="1220" y="518" width="262" height="4" fill="#1f1f1f" opacity=".5"/><rect x="982" y="476" width="22" height="26" fill="#333333" /><rect x="978" y="503" width="40" height="12" fill="#737373" opacity=".6"/><rect x="740" y="130" width="440" height="580" fill="#fff" filter="url(#nfD)" opacity=".2"/><rect x="1370" y="130" width="210" height="285" fill="#fff" filter="url(#nfD)" opacity=".2"/><rect x="1100" y="534" width="480" height="180" fill="#fff" filter="url(#nfD)" opacity=".25"/><rect x="740" y="130" width="440" height="580" fill="#000" filter="url(#nfL)" opacity=".15"/><rect x="1370" y="130" width="210" height="285" fill="#000" filter="url(#nfL)" opacity=".18"/><rect x="1100" y="534" width="480" height="180" fill="#000" filter="url(#nfL)" opacity=".12"/></g><g clip-path="url(#mo)" fill="none" stroke="#000" stroke-width="1.100"><polyline points="907,227 892,280 897,345 902,399 904,433"/><polyline points="889,224 900,252"/><polyline points="904,433 780,480 749,557 884,609"/><polyline points="904,433 952,497 847,669"/><polyline points="884,443 889,600 884,609"/><polyline points="761,478 773,492"/><polyline points="917,322 982,279 1031,250 1076,221"/><polyline points="917,322 971,380 1034,390.5 1049,381 1102.5,400 1121,385"/><polyline points="1049,381 1060,305 1075,227 1076,218 1110,221 1121,385"/><polyline points="1121,385 1170,395 1186,384"/><polyline points="1180,145 1178,210"/><polyline points="1190,211 1186,384 1240,399 1252,394.5"/><polyline points="1026,229 1162,142"/><polyline points="1026,229 1031,248"/><polyline points="1094,203 1120,207.5 1177,210 1255,217.5 1252.5,394"/><polyline points="1240,399 1252.5,394 1280,406 1335,385 1370,388"/><polyline points="1301,379 1335,385"/><polyline points="1137,155 1162,142 1186,146"/><polyline points="964,219 975,255 982,279"/><polyline points="971,380 972,399 971,420 969,472"/><polyline points="1192.5,209 1195,196 1324,216 1301,379 1370,387.5 1422.5,394 1436,380 1466,245"/><polyline points="1370,221 1370,683"/><polyline points="1031,412.5 1002.5,447.5 1027.5,447.5 1031,412.5"/><polyline points="1002.5,447.5 969,471"/><polyline points="969,472.5 1075,481"/><polyline points="969,472 966,496"/><polyline points="981,475 967.5,495"/><polyline points="952,497 966,496 1025,487.5 1025,479"/><polyline points="966,496 1014,494 1072.5,662.5"/><polyline points="1034,390.5 1034,427 1075,477.5 1102.5,404 1147.5,456 1170,409 1215,461 1215,482.5"/><polyline points="1102.5,400 1102.5,404"/><polyline points="1075,477.5 1075,481 1077.5,662.5"/><polyline points="1075,486 1150,489 1215,482.5 1216,484"/><polyline points="1147.5,456 1150,489 1155,657.5 1220,665"/><polyline points="1170,395 1170,409"/><polyline points="1215,460 1240,400"/><polyline points="1280,406 1284,486"/><polyline points="1216,484 1284,486 1294,495 1282.5,575 1284,669"/><polyline points="1216,484 1220,665"/><polyline points="1290,490 1314,454 1382.5,459 1405,400"/><polyline points="1295,486 1332.5,489 1382.5,462.5"/><polyline points="1332.5,489 1379,669"/><polyline points="1382.5,459 1382.5,462.5 1440,659 1495,650"/><polyline points="1422,395 1436,400 1481,527.5 1490,650"/><polyline points="1222,675 1292,668 1340,680"/><polyline points="1379,669 1440,664"/></g><polygon points="811,221 876,236 879,224 889,224 893,232 899,226 960,231 964,219 1002,231 1009,212 1030,216 1030,207 1050,211 1063,204 1137,155 1137,136 1162,141 1186,146 1326,174 1347,216 1370,221 1420,229 1420,247 1466,245 1464,270 1524,260 1517,382 1561,384 1561,456 1555,457 1541,577 1510,579 1510,591 1497,592 1501,650 1505,705 1390,705 1340,693 1292,682 1222,689 1222,675 1140,668 1131,667 1062,664 1055,690 984,660 894,695 774,671 777,589 756,587 748,555" fill="none" stroke="#0a2a04" stroke-width="1.300"/><g fill="none" stroke="#000" stroke-width=".9"><ellipse cx="1101" cy="214" rx="2.300" ry="1.800"/><ellipse cx="1107" cy="220" rx="2.300" ry="1.800"/><ellipse cx="1083" cy="225" rx="2.300" ry="1.800"/><ellipse cx="1098" cy="212" rx="2.300" ry="1.800"/><ellipse cx="1135" cy="219" rx="2.300" ry="1.800"/><ellipse cx="1142" cy="215" rx="2.300" ry="1.800"/><ellipse cx="1150" cy="222" rx="2.300" ry="1.800"/><ellipse cx="1118" cy="246" rx="2.300" ry="1.800"/><ellipse cx="1164" cy="229" rx="2.300" ry="1.800"/><ellipse cx="1171" cy="188" rx="2.300" ry="1.800"/><ellipse cx="1145" cy="175" rx="2.300" ry="1.800"/><ellipse cx="1296" cy="291" rx="2.300" ry="1.800"/><ellipse cx="1300" cy="385" rx="2.300" ry="1.800"/><ellipse cx="1304" cy="383" rx="2.300" ry="1.800"/><ellipse cx="787" cy="585" rx="2.300" ry="1.800"/></g></svg><div style="position:absolute;left:598px;top:659px;width:77px;height:1px;background:#000"></div><div style="position:absolute;left:674px;top:659px;width:1px;height:5px;background:#000"></div><span class="t" style="left:613.00px;top:664px;height:12px;line-height:12px;font-size:11px;color:#000;letter-spacing:-0.172px;">28.6 м</span><div style="position:absolute;left:1841px;top:636px;width:1px;height:36px;background:#000"></div><div style="position:absolute;left:1841px;top:671px;width:36px;height:1px;background:#000"></div><span class="t" style="left:1839.00px;top:622px;height:12px;line-height:12px;font-size:11px;color:#000;">Y</span><span class="t" style="left:1879.00px;top:666px;height:12px;line-height:12px;font-size:11px;color:#000;">X</span>
<!-- photos -->
<svg style="position:absolute;left:516px;top:740px;" width="16" height="16" viewBox="0 0 16 16"><circle cx="8" cy="8" r="6.500" fill="#c0c0c0" stroke="#a8a8a8"/></svg><svg style="position:absolute;left:539px;top:740px;" width="16" height="16" viewBox="0 0 16 16"><circle cx="8" cy="8" r="6.500" fill="#c0c0c0" stroke="#a8a8a8"/></svg><svg style="position:absolute;left:562px;top:740px;" width="16" height="16" viewBox="0 0 16 16"><path d="M2.500 2.500l11 11M13.500 2.500l-11 11" stroke="#606060" stroke-width="1.800"/></svg><div style="position:absolute;left:584px;top:739px;width:1px;height:18px;background:#c8c8c8"></div><svg style="position:absolute;left:591px;top:740px;" width="16" height="16" viewBox="0 0 16 16"><path d="M7 1.500v13h-6z" fill="#e4e4e4" stroke="#a0a0a0"/><path d="M9.500 1.500v13h6z" fill="#f4f4f4" stroke="#a0a0a0"/></svg><svg style="position:absolute;left:614px;top:740px;" width="16" height="16" viewBox="0 0 16 16"><path d="M5.500 3.500v11h-5z" fill="#e4e4e4" stroke="#a0a0a0"/><path d="M8 14.500h7.500l-7.500-5z" fill="#f4f4f4" stroke="#a0a0a0"/><path d="M8 5c2-3 5-3 6.500-1l1-1v4h-4l1.300-1.300c-1-1.200-3-1-4 .6z" fill="#b0b0b0"/></svg><div style="position:absolute;left:636px;top:739px;width:1px;height:18px;background:#c8c8c8"></div><svg style="position:absolute;left:643px;top:740px;" width="16" height="16" viewBox="0 0 16 16"><g fill="#bdbdbd" stroke="#8c8c8c" stroke-width=".8"><rect x="1" y="5" width="6" height="9.500" rx="1"/><rect x="9" y="5" width="6" height="9.500" rx="1"/><rect x="2.500" y="1" width="3.500" height="4"/><rect x="10" y="1" width="3.500" height="4"/><rect x="6.500" y="6.500" width="3" height="3"/></g></svg><div style="position:absolute;left:665px;top:739px;width:17px;height:18px;background:#cce4f7;border:1px solid #58a6e6;box-sizing:border-box"></div><svg style="position:absolute;left:666px;top:740px;" width="16" height="16" viewBox="0 0 16 16"><circle cx="8" cy="8.500" r="4.500" fill="none" stroke="#58a6e6" stroke-width="1.600"/><path d="M3 3l2 2M13 3l-2 2M3 14l2-2M13 14l-2-2" stroke="#8cc4f0" stroke-width="1.200"/></svg><svg style="position:absolute;left:689px;top:740px;" width="16" height="16" viewBox="0 0 16 16"><rect x="1.0" y="1.0" width="3" height="3" rx=".8" fill="none" stroke="#8ab030" stroke-width="1.200"/><rect x="6.2" y="1.0" width="3" height="3" rx=".8" fill="none" stroke="#4a9ae0" stroke-width="1.200"/><rect x="11.4" y="1.0" width="3" height="3" rx=".8" fill="none" stroke="#f07840" stroke-width="1.200"/><rect x="1.0" y="6.2" width="3" height="3" rx=".8" fill="none" stroke="#9a7ae0" stroke-width="1.200"/><rect x="6.2" y="6.2" width="3" height="3" rx=".8" fill="none" stroke="#f07840" stroke-width="1.200"/><rect x="11.4" y="6.2" width="3" height="3" rx=".8" fill="none" stroke="#4a9ae0" stroke-width="1.200"/><rect x="1.0" y="11.4" width="3" height="3" rx=".8" fill="none" stroke="#8ab030" stroke-width="1.200"/><rect x="6.2" y="11.4" width="3" height="3" rx=".8" fill="none" stroke="#4a9ae0" stroke-width="1.200"/><rect x="11.4" y="11.4" width="3" height="3" rx=".8" fill="none" stroke="#f07840" stroke-width="1.200"/></svg><svg style="position:absolute;left:710px;top:746px;" width="8" height="5" viewBox="0 0 8 5"><path d="M0 0h7l-3.500 4z" fill="#000"/></svg><svg style="position:absolute;left:524px;top:785px;overflow:hidden" width="100" height="74" viewBox="0 0 100 74"><filter id="tb0" x="0" y="0" width="100%" height="100%"><feGaussianBlur stdDeviation=".7"/></filter><g filter="url(#tb0)"><rect x="-5" y="-5" width="110" height="84" fill="#2a2a2a"/><defs><pattern id="tp0_a" width="3.2" height="3.2" patternUnits="userSpaceOnUse" patternTransform="rotate(-16)"><rect width="3.2" height="3.2" fill="#1e1e1e"/><rect width="3.2" height="1.44" fill="#3c3c3c"/></pattern><pattern id="tp0_b" width="4" height="4" patternUnits="userSpaceOnUse" patternTransform="rotate(-16)"><rect width="4" height="4" fill="#6a6a6a"/><rect width="4" height="1.8" fill="#2a2a2a"/></pattern></defs><rect width="100" height="74" fill="#2a2a2a"/><polygon points="3,0 100,0 100,18 12,40" fill="url(#tp0_a)"/><polygon points="12,40 100,18 100,74 28,74" fill="#5a5a5a"/><polygon points="14,42 62,30 66,52 22,66" fill="#686868"/><polygon points="64,29 100,19 100,74 72,74" fill="url(#tp0_b)"/><polygon points="0,0 4,0 30,74 20,74 0,12" fill="#4a4a4a"/><polygon points="0,12 20,74 0,74" fill="#262626"/><path d="M62 30l10-2 2 4-10 3zM64 49l12-3 1 4-11 3z" fill="#9a9a9a" opacity=".7"/></g></svg><svg style="position:absolute;left:607px;top:775px;" width="16" height="16" viewBox="0 0 16 16"><path d="M1 7.500l3.500-2.500 2.500 3 6.500-7.500 2.500 2-8.500 10.500z" fill="#8ed022" stroke="#5a9a0c" stroke-width=".8"/><path d="M2.500 7.500l2-1.200 2.500 3 6.500-7" fill="none" stroke="#c8f060" stroke-width="1"/></svg><span class="t" style="left:536.25px;top:874px;height:14px;line-height:14px;font-size:12px;color:#000;letter-spacing:-0.469px;">IMG_0200_1.tif</span><svg style="position:absolute;left:636px;top:785px;overflow:hidden" width="100" height="74" viewBox="0 0 100 74"><filter id="tb1" x="0" y="0" width="100%" height="100%"><feGaussianBlur stdDeviation=".7"/></filter><g filter="url(#tb1)"><rect x="-5" y="-5" width="110" height="84" fill="#2a2a2a"/><defs><pattern id="tp1_a" width="3.2" height="3.2" patternUnits="userSpaceOnUse" patternTransform="rotate(-16)"><rect width="3.2" height="3.2" fill="#1e1e1e"/><rect width="3.2" height="1.44" fill="#3a3a3a"/></pattern><pattern id="tp1_b" width="4" height="4" patternUnits="userSpaceOnUse" patternTransform="rotate(-16)"><rect width="4" height="4" fill="#686868"/><rect width="4" height="1.8" fill="#2a2a2a"/></pattern></defs><rect width="100" height="74" fill="#2a2a2a"/><polygon points="4,2 100,0 100,34 20,58" fill="url(#tp1_a)"/><polygon points="20,58 100,34 100,74 26,74" fill="#606060"/><polygon points="70,44 100,35 100,74 78,74" fill="url(#tp1_b)"/><polygon points="0,0 5,0 28,74 18,74 0,18" fill="#4a4a4a"/><polygon points="0,18 18,74 0,74" fill="#242424"/><rect x="4" y="0" width="10" height="4" fill="#c0c0c0"/></g></svg><svg style="position:absolute;left:719px;top:775px;" width="16" height="16" viewBox="0 0 16 16"><path d="M1 7.500l3.500-2.500 2.500 3 6.500-7.500 2.500 2-8.500 10.500z" fill="#8ed022" stroke="#5a9a0c" stroke-width=".8"/><path d="M2.500 7.500l2-1.200 2.500 3 6.500-7" fill="none" stroke="#c8f060" stroke-width="1"/></svg><span class="t" style="left:648.25px;top:874px;height:14px;line-height:14px;font-size:12px;color:#000;letter-spacing:-0.469px;">IMG_0201_1.tif</span><svg style="position:absolute;left:748px;top:785px;overflow:hidden" width="100" height="74" viewBox="0 0 100 74"><filter id="tb2" x="0" y="0" width="100%" height="100%"><feGaussianBlur stdDeviation=".7"/></filter><g filter="url(#tb2)"><rect x="-5" y="-5" width="110" height="84" fill="#2a2a2a"/><defs><pattern id="tp2_a" width="3.2" height="3.2" patternUnits="userSpaceOnUse" patternTransform="rotate(-16)"><rect width="3.2" height="3.2" fill="#1c1c1c"/><rect width="3.2" height="1.44" fill="#363636"/></pattern></defs><rect width="100" height="74" fill="#262626"/><polygon points="14,28 100,4 100,74 32,74" fill="url(#tp2_a)"/><polygon points="8,14 58,0 100,0 100,5 14,29" fill="#707070"/><polygon points="0,0 40,0 8,12" fill="#1e1e1e"/><polygon points="0,14 6,12 30,74 20,74 0,30" fill="#484848"/><rect x="11" y="16" width="8" height="7" fill="#c8c8c8" transform="rotate(-16 15 20)"/><polygon points="72,66 100,58 100,74 76,74" fill="#4a4a4a"/></g></svg><svg style="position:absolute;left:831px;top:775px;" width="16" height="16" viewBox="0 0 16 16"><path d="M1 7.500l3.500-2.500 2.500 3 6.500-7.500 2.500 2-8.500 10.500z" fill="#8ed022" stroke="#5a9a0c" stroke-width=".8"/><path d="M2.500 7.500l2-1.200 2.500 3 6.500-7" fill="none" stroke="#c8f060" stroke-width="1"/></svg><span class="t" style="left:760.25px;top:874px;height:14px;line-height:14px;font-size:12px;color:#000;letter-spacing:-0.469px;">IMG_0202_1.tif</span><svg style="position:absolute;left:860px;top:785px;overflow:hidden" width="100" height="74" viewBox="0 0 100 74"><filter id="tb3" x="0" y="0" width="100%" height="100%"><feGaussianBlur stdDeviation=".7"/></filter><g filter="url(#tb3)"><rect x="-5" y="-5" width="110" height="84" fill="#2a2a2a"/><defs><pattern id="tp3_a" width="3.2" height="3.2" patternUnits="userSpaceOnUse" patternTransform="rotate(-16)"><rect width="3.2" height="3.2" fill="#1c1c1c"/><rect width="3.2" height="1.44" fill="#343434"/></pattern></defs><rect width="100" height="74" fill="#242424"/><polygon points="16,44 100,20 100,74 30,74" fill="url(#tp3_a)"/><polygon points="10,30 100,4 100,21 16,45" fill="#5c5c5c"/><polygon points="0,0 100,0 100,3 8,28 0,14" fill="#1c1c1c"/><polygon points="0,14 8,28 26,74 14,74 0,40" fill="#444"/><rect x="14" y="32" width="8" height="7" fill="#c0c0c0" transform="rotate(-16 18 36)"/></g></svg><svg style="position:absolute;left:943px;top:775px;" width="16" height="16" viewBox="0 0 16 16"><path d="M1 7.500l3.500-2.500 2.500 3 6.500-7.500 2.500 2-8.500 10.500z" fill="#8ed022" stroke="#5a9a0c" stroke-width=".8"/><path d="M2.500 7.500l2-1.200 2.500 3 6.500-7" fill="none" stroke="#c8f060" stroke-width="1"/></svg><span class="t" style="left:872.25px;top:874px;height:14px;line-height:14px;font-size:12px;color:#000;letter-spacing:-0.469px;">IMG_0203_1.tif</span><svg style="position:absolute;left:972px;top:785px;overflow:hidden" width="100" height="74" viewBox="0 0 100 74"><filter id="tb4" x="0" y="0" width="100%" height="100%"><feGaussianBlur stdDeviation=".7"/></filter><g filter="url(#tb4)"><rect x="-5" y="-5" width="110" height="84" fill="#2a2a2a"/><defs><pattern id="tp4_a" width="3.2" height="3.2" patternUnits="userSpaceOnUse" patternTransform="rotate(-16)"><rect width="3.2" height="3.2" fill="#1c1c1c"/><rect width="3.2" height="1.44" fill="#343434"/></pattern></defs><rect width="100" height="74" fill="#222"/><polygon points="20,60 100,36 100,74 26,74" fill="url(#tp4_a)"/><polygon points="12,46 100,20 100,37 18,61" fill="#585858"/><polygon points="0,0 100,0 100,19 10,45 0,24" fill="#1c1c1c"/><polygon points="0,24 10,45 20,74 8,74 0,56" fill="#404040"/><rect x="18" y="52" width="9" height="7" fill="#b8b8b8" transform="rotate(-16 22 56)"/></g></svg><svg style="position:absolute;left:1055px;top:775px;" width="16" height="16" viewBox="0 0 16 16"><path d="M1 7.500l3.500-2.500 2.500 3 6.500-7.500 2.500 2-8.500 10.500z" fill="#8ed022" stroke="#5a9a0c" stroke-width=".8"/><path d="M2.500 7.500l2-1.200 2.500 3 6.500-7" fill="none" stroke="#c8f060" stroke-width="1"/></svg><span class="t" style="left:984.25px;top:874px;height:14px;line-height:14px;font-size:12px;color:#000;letter-spacing:-0.469px;">IMG_0204_1.tif</span><svg style="position:absolute;left:1084px;top:785px;overflow:hidden" width="100" height="74" viewBox="0 0 100 74"><filter id="tb5" x="0" y="0" width="100%" height="100%"><feGaussianBlur stdDeviation=".7"/></filter><g filter="url(#tb5)"><rect x="-5" y="-5" width="110" height="84" fill="#2a2a2a"/><defs><pattern id="tp5_a" width="5" height="5" patternUnits="userSpaceOnUse" patternTransform="rotate(60)"><rect width="5" height="5" fill="#2e2e2e"/><rect width="5" height="2.25" fill="#383838"/></pattern></defs><rect width="100" height="74" fill="#303030"/><rect width="100" height="74" fill="url(#tp5_a)" opacity=".6"/><polygon points="40,20 100,30 100,74 30,74" fill="#3a3a3a" opacity=".5"/><polygon points="0,0 14,0 0,26" fill="#1a1a1a"/><path d="M0 20L13 0" stroke="#e0e0e0" stroke-width="2.500"/><polygon points="0,62 10,74 0,74" fill="#222"/><path d="M0 64l16 10" stroke="#aaa" stroke-width="1.500"/></g></svg><svg style="position:absolute;left:1167px;top:775px;" width="16" height="16" viewBox="0 0 16 16"><path d="M1 7.500l3.500-2.500 2.500 3 6.500-7.500 2.500 2-8.500 10.500z" fill="#8ed022" stroke="#5a9a0c" stroke-width=".8"/><path d="M2.500 7.500l2-1.200 2.500 3 6.500-7" fill="none" stroke="#c8f060" stroke-width="1"/></svg><span class="t" style="left:1096.25px;top:874px;height:14px;line-height:14px;font-size:12px;color:#000;letter-spacing:-0.469px;">IMG_0205_1.tif</span><svg style="position:absolute;left:524px;top:911px;overflow:hidden" width="100" height="74" viewBox="0 0 100 74"><filter id="tb6" x="0" y="0" width="100%" height="100%"><feGaussianBlur stdDeviation=".7"/></filter><g filter="url(#tb6)"><rect x="-5" y="-5" width="110" height="84" fill="#2a2a2a"/><rect width="100" height="74" fill="#191919"/><polygon points="0,0 14,0 30,36 0,46" fill="#262626"/><path d="M13 0l34 74" stroke="#3c3c3c" stroke-width="7"/><path d="M0 46l100-34" stroke="#3a3a3a" stroke-width="3.500"/><path d="M66 0l8 18M28 0l8 22" stroke="#2c2c2c" stroke-width="2"/><path d="M18 8l7 15" stroke="#e8e8e8" stroke-width="1.800"/><rect x="28" y="44" width="7" height="7" fill="#6a6a6a"/><polygon points="24,44 38,40 52,74 34,74" fill="#333"/></g></svg><svg style="position:absolute;left:607px;top:901px;" width="16" height="16" viewBox="0 0 16 16"><path d="M1 7.500l3.500-2.500 2.500 3 6.500-7.500 2.500 2-8.500 10.500z" fill="#8ed022" stroke="#5a9a0c" stroke-width=".8"/><path d="M2.500 7.500l2-1.200 2.500 3 6.500-7" fill="none" stroke="#c8f060" stroke-width="1"/></svg><span class="t" style="left:536.25px;top:1000px;height:14px;line-height:14px;font-size:12px;color:#000;letter-spacing:-0.469px;">IMG_0206_1.tif</span><svg style="position:absolute;left:636px;top:911px;overflow:hidden" width="100" height="74" viewBox="0 0 100 74"><filter id="tb7" x="0" y="0" width="100%" height="100%"><feGaussianBlur stdDeviation=".7"/></filter><g filter="url(#tb7)"><rect x="-5" y="-5" width="110" height="84" fill="#2a2a2a"/><rect width="100" height="74" fill="#181818"/><path d="M60 14l-18 60" stroke="#4a4a4a" stroke-width="2.500"/><path d="M32 0l28 13 40-4" stroke="#3a3a3a" stroke-width="3" fill="none"/><path d="M54 47l46 11" stroke="#383838" stroke-width="1.800"/><path d="M92 60l-2 14" stroke="#333" stroke-width="1.200"/><path d="M70 2l25 7" stroke="#e8e8e8" stroke-width="2"/><polygon points="62,16 100,12 100,55 55,45" fill="#1f1f1f"/></g></svg><svg style="position:absolute;left:719px;top:901px;" width="16" height="16" viewBox="0 0 16 16"><path d="M1 7.500l3.500-2.500 2.500 3 6.500-7.500 2.500 2-8.500 10.500z" fill="#8ed022" stroke="#5a9a0c" stroke-width=".8"/><path d="M2.500 7.500l2-1.200 2.500 3 6.500-7" fill="none" stroke="#c8f060" stroke-width="1"/></svg><span class="t" style="left:648.25px;top:1000px;height:14px;line-height:14px;font-size:12px;color:#000;letter-spacing:-0.469px;">IMG_0207_1.tif</span><svg style="position:absolute;left:748px;top:911px;overflow:hidden" width="100" height="74" viewBox="0 0 100 74"><filter id="tb8" x="0" y="0" width="100%" height="100%"><feGaussianBlur stdDeviation=".7"/></filter><g filter="url(#tb8)"><rect x="-5" y="-5" width="110" height="84" fill="#2a2a2a"/><defs><pattern id="tp8_a" width="3.2" height="3.2" patternUnits="userSpaceOnUse" patternTransform="rotate(24)"><rect width="3.2" height="3.2" fill="#222"/><rect width="3.2" height="1.44" fill="#363636"/></pattern><pattern id="tp8_b" width="4.2" height="4.2" patternUnits="userSpaceOnUse" patternTransform="rotate(24)"><rect width="4.2" height="4.2" fill="#9a9a9a"/><rect width="4.2" height="1.89" fill="#3c3c3c"/></pattern></defs><rect width="100" height="74" fill="#262626"/><g transform="translate(0 0)"><polygon points="4,28 22,14 104,52 104,74 0,74" fill="url(#tp8_a)"/><polygon points="22,0 104,0 104,52 14,12" fill="url(#tp8_b)"/><polygon points="70,12 104,10 104,52 60,32" fill="#565656"/><polygon points="78,0 104,0 104,10 70,12" fill="#3c3c3c"/><path d="M68 14l36 16M62 32l42 18" stroke="#777" stroke-width="2.500" opacity=".6"/><polygon points="0,0 26,0 4,30 0,34" fill="#585858"/><path d="M26 0L2 32" stroke="#a8a8a8" stroke-width="3"/></g><polygon points="0,52 46,74 0,74" fill="#8a8a8a"/><polygon points="0,60 30,74 0,74" fill="#b0b0b0" opacity=".6"/></g></svg><svg style="position:absolute;left:831px;top:901px;" width="16" height="16" viewBox="0 0 16 16"><path d="M1 7.500l3.500-2.500 2.500 3 6.500-7.500 2.500 2-8.500 10.500z" fill="#8ed022" stroke="#5a9a0c" stroke-width=".8"/><path d="M2.500 7.500l2-1.200 2.500 3 6.500-7" fill="none" stroke="#c8f060" stroke-width="1"/></svg><span class="t" style="left:760.25px;top:1000px;height:14px;line-height:14px;font-size:12px;color:#000;letter-spacing:-0.469px;">IMG_0208_1.tif</span><svg style="position:absolute;left:860px;top:911px;overflow:hidden" width="100" height="74" viewBox="0 0 100 74"><filter id="tb9" x="0" y="0" width="100%" height="100%"><feGaussianBlur stdDeviation=".7"/></filter><g filter="url(#tb9)"><rect x="-5" y="-5" width="110" height="84" fill="#2a2a2a"/><defs><pattern id="tp9_a" width="3.2" height="3.2" patternUnits="userSpaceOnUse" patternTransform="rotate(24)"><rect width="3.2" height="3.2" fill="#222"/><rect width="3.2" height="1.44" fill="#363636"/></pattern><pattern id="tp9_b" width="4.2" height="4.2" patternUnits="userSpaceOnUse" patternTransform="rotate(24)"><rect width="4.2" height="4.2" fill="#9a9a9a"/><rect width="4.2" height="1.89" fill="#3c3c3c"/></pattern></defs><rect width="100" height="74" fill="#262626"/><g transform="translate(-4 0)"><polygon points="4,28 22,14 104,52 104,74 0,74" fill="url(#tp9_a)"/><polygon points="22,0 104,0 104,52 14,12" fill="url(#tp9_b)"/><polygon points="70,12 104,10 104,52 60,32" fill="#565656"/><polygon points="78,0 104,0 104,10 70,12" fill="#3c3c3c"/><path d="M68 14l36 16M62 32l42 18" stroke="#777" stroke-width="2.500" opacity=".6"/><polygon points="0,0 26,0 4,30 0,34" fill="#585858"/><path d="M26 0L2 32" stroke="#a8a8a8" stroke-width="3"/></g></g></svg><svg style="position:absolute;left:943px;top:901px;" width="16" height="16" viewBox="0 0 16 16"><path d="M1 7.500l3.500-2.500 2.500 3 6.500-7.500 2.500 2-8.500 10.500z" fill="#8ed022" stroke="#5a9a0c" stroke-width=".8"/><path d="M2.500 7.500l2-1.200 2.500 3 6.500-7" fill="none" stroke="#c8f060" stroke-width="1"/></svg><span class="t" style="left:872.25px;top:1000px;height:14px;line-height:14px;font-size:12px;color:#000;letter-spacing:-0.469px;">IMG_0209_1.tif</span><svg style="position:absolute;left:972px;top:911px;overflow:hidden" width="100" height="74" viewBox="0 0 100 74"><filter id="tb10" x="0" y="0" width="100%" height="100%"><feGaussianBlur stdDeviation=".7"/></filter><g filter="url(#tb10)"><rect x="-5" y="-5" width="110" height="84" fill="#2a2a2a"/><defs><pattern id="tp10_a" width="3.2" height="3.2" patternUnits="userSpaceOnUse" patternTransform="rotate(32)"><rect width="3.2" height="3.2" fill="#1e1e1e"/><rect width="3.2" height="1.44" fill="#343434"/></pattern></defs><rect width="100" height="74" fill="#1a1a1a"/><polygon points="0,0 56,0 100,30 78,74 70,74 0,28" fill="url(#tp10_a)"/><polygon points="56,0 100,0 100,30" fill="#444"/><polygon points="0,28 70,74 46,74 0,44" fill="#7a7a7a"/><polygon points="0,44 46,74 0,74" fill="#1c1c1c"/><polygon points="100,30 100,74 80,74" fill="#303030"/><path d="M100 28L78 74" stroke="#5a5a5a" stroke-width="2"/><rect x="60" y="71" width="8" height="4" fill="#eee"/></g></svg><svg style="position:absolute;left:1055px;top:901px;" width="16" height="16" viewBox="0 0 16 16"><path d="M1 7.500l3.500-2.500 2.500 3 6.500-7.500 2.500 2-8.500 10.500z" fill="#8ed022" stroke="#5a9a0c" stroke-width=".8"/><path d="M2.500 7.500l2-1.200 2.500 3 6.500-7" fill="none" stroke="#c8f060" stroke-width="1"/></svg><span class="t" style="left:984.25px;top:1000px;height:14px;line-height:14px;font-size:12px;color:#000;letter-spacing:-0.469px;">IMG_0210_1.tif</span><svg style="position:absolute;left:1084px;top:911px;overflow:hidden" width="100" height="74" viewBox="0 0 100 74"><filter id="tb11" x="0" y="0" width="100%" height="100%"><feGaussianBlur stdDeviation=".7"/></filter><g filter="url(#tb11)"><rect x="-5" y="-5" width="110" height="84" fill="#2a2a2a"/><defs><pattern id="tp11_a" width="3.2" height="3.2" patternUnits="userSpaceOnUse" patternTransform="rotate(-4)"><rect width="3.2" height="3.2" fill="#1e1e1e"/><rect width="3.2" height="1.44" fill="#363636"/></pattern><pattern id="tp11_b" width="4" height="4" patternUnits="userSpaceOnUse" patternTransform="rotate(-4)"><rect width="4" height="4" fill="#5a5a5a"/><rect width="4" height="1.8" fill="#2c2c2c"/></pattern></defs><rect width="100" height="74" fill="#2a2a2a"/><polygon points="0,24 92,12 100,66 0,74" fill="url(#tp11_a)"/><polygon points="0,0 100,0 92,12 0,24" fill="#404040"/><polygon points="0,0 38,0 40,18 0,24" fill="url(#tp11_b)"/><polygon points="92,0 100,0 100,74 98,60" fill="#383838"/><polygon points="0,68 100,62 100,74 0,74" fill="#3c3c3c"/><rect x="91" y="68" width="7" height="5" fill="#ccc"/></g></svg><svg style="position:absolute;left:1167px;top:901px;" width="16" height="16" viewBox="0 0 16 16"><path d="M1 7.500l3.500-2.500 2.500 3 6.500-7.500 2.500 2-8.500 10.500z" fill="#8ed022" stroke="#5a9a0c" stroke-width=".8"/><path d="M2.500 7.500l2-1.200 2.500 3 6.500-7" fill="none" stroke="#c8f060" stroke-width="1"/></svg><span class="t" style="left:1096.25px;top:1000px;height:14px;line-height:14px;font-size:12px;color:#000;letter-spacing:-0.405px;">IMG_0211_1.tif</span><div style="position:absolute;left:1308px;top:762px;width:17px;height:255px;background:#f0f0f0"></div><div style="position:absolute;left:1308px;top:780px;width:17px;height:72px;background:#cdcdcd"></div><svg style="position:absolute;left:1312px;top:767px;" width="9" height="6" viewBox="0 0 9 6"><path d="M.500 5l4-4 4 4" fill="none" stroke="#404040" stroke-width="1.400"/></svg><svg style="position:absolute;left:1312px;top:1005px;" width="9" height="6" viewBox="0 0 9 6"><path d="M.500 1l4 4 4-4" fill="none" stroke="#404040" stroke-width="1.400"/></svg>
<!-- console -->
<svg style="position:absolute;left:1335px;top:740px;" width="16" height="16" viewBox="0 0 16 16"><path d="M1.5 1.5h13v13h-11l-2-2z" fill="#3b9be0" stroke="#1f6fb5"/><rect x="3.5" y="2.5" width="9" height="5" fill="#e8f2fb"/><path d="M4.5 4h3M8.5 4h3M4.5 5.7h7" stroke="#7a9bb8" stroke-width=".8"/><rect x="5" y="10" width="6" height="4.5" fill="#e8f2fb"/><rect x="6" y="11" width="2" height="3" fill="#2a5f94"/></svg><svg style="position:absolute;left:1358px;top:740px;" width="16" height="16" viewBox="0 0 16 16"><rect x="4.500" y="1.500" width="9" height="13" rx="1" fill="#c8c8c8" stroke="#8a8a8a"/><rect x="6" y="3" width="6" height="3" fill="#f0f0f0" stroke="#8a8a8a" stroke-width=".5"/><g fill="#7a7a7a"><rect x="6" y="7.500" width="1.500" height="1.500"/><rect x="8.300" y="7.500" width="1.500" height="1.500"/><rect x="10.600" y="7.500" width="1.500" height="1.500"/><rect x="6" y="10" width="1.500" height="1.500"/><rect x="8.300" y="10" width="1.500" height="1.500"/><rect x="10.600" y="10" width="1.500" height="1.500"/><rect x="6" y="12.300" width="1.500" height="1.500"/><rect x="8.300" y="12.300" width="1.500" height="1.500"/><rect x="10.600" y="12.300" width="1.500" height="1.500"/></g><path d="M1.500 6c0-1.500 2-1.500 2 0v6c0 1.500-2 1.500-2 0z" fill="#c8c8c8" stroke="#8a8a8a"/></svg><div style="position:absolute;left:1380px;top:739px;width:1px;height:18px;background:#c8c8c8"></div><svg style="position:absolute;left:1387px;top:740px;" width="16" height="16" viewBox="0 0 16 16"><path d="M2.500 .500h7l3 3v9h-10z" fill="#fff" stroke="#b0b0b0"/><path d="M9.500 .500v3h3" fill="#eee" stroke="#b0b0b0"/><path d="M5.500 9.500l-2.500 3 2.500 3M10.500 9.500l2.500 3-2.500 3" fill="none" stroke="#1f7fd0" stroke-width="1.700"/><path d="M8.600 9.500l-1.200 6" stroke="#1f7fd0" stroke-width="1.300"/></svg><span class="t" style="left:1335.00px;top:763px;height:14px;line-height:14px;font-size:11.67px;color:#808080;font-family:'Liberation Mono', monospace;">2024-11-08 08:40:07</span><span class="t" style="left:1475.00px;top:763px;height:14px;line-height:14px;font-size:11.67px;color:#000;font-family:'Liberation Mono', monospace;">Analyzing orthomosaic...</span><span class="t" style="left:1335.00px;top:777px;height:14px;line-height:14px;font-size:11.67px;color:#808080;font-family:'Liberation Mono', monospace;">2024-11-08 08:40:07</span><span class="t" style="left:1475.00px;top:777px;height:14px;line-height:14px;font-size:11.67px;color:#000;font-family:'Liberation Mono', monospace;">Analyzing orthomosaic...</span><span class="t" style="left:1335.00px;top:791px;height:14px;line-height:14px;font-size:11.67px;color:#808080;font-family:'Liberation Mono', monospace;">2024-11-08 08:40:07</span><span class="t" style="left:1475.00px;top:791px;height:14px;line-height:14px;font-size:11.67px;color:#000;font-family:'Liberation Mono', monospace;">Analyzing orthomosaic...</span><span class="t" style="left:1335.00px;top:805px;height:14px;line-height:14px;font-size:11.67px;color:#808080;font-family:'Liberation Mono', monospace;">2024-11-08 08:40:16</span><span class="t" style="left:1475.00px;top:805px;height:14px;line-height:14px;font-size:11.67px;color:#000;font-family:'Liberation Mono', monospace;">Analyzing photos...</span><span class="t" style="left:1335.00px;top:819px;height:14px;line-height:14px;font-size:11.67px;color:#808080;font-family:'Liberation Mono', monospace;">2024-11-08 08:40:16</span><span class="t" style="left:1475.00px;top:819px;height:14px;line-height:14px;font-size:11.67px;color:#000;font-family:'Liberation Mono', monospace;">Finished processing in 0 sec (exit code 1)</span><span class="t" style="left:1335.00px;top:833px;height:14px;line-height:14px;font-size:11.67px;color:#808080;font-family:'Liberation Mono', monospace;">2024-11-08 08:40:16</span><span class="t" style="left:1475.00px;top:833px;height:14px;line-height:14px;font-size:11.67px;color:#000;font-family:'Liberation Mono', monospace;">Analyzing orthomosaic...</span><span class="t" style="left:1335.00px;top:847px;height:14px;line-height:14px;font-size:11.67px;color:#808080;font-family:'Liberation Mono', monospace;">2024-11-08 08:40:16</span><span class="t" style="left:1475.00px;top:847px;height:14px;line-height:14px;font-size:11.67px;color:#000;font-family:'Liberation Mono', monospace;">Analyzing orthomosaic...</span><span class="t" style="left:1335.00px;top:861px;height:14px;line-height:14px;font-size:11.67px;color:#808080;font-family:'Liberation Mono', monospace;">2024-11-08 08:40:17</span><span class="t" style="left:1475.00px;top:861px;height:14px;line-height:14px;font-size:11.67px;color:#000;font-family:'Liberation Mono', monospace;">Analyzing orthomosaic...</span><span class="t" style="left:1335.00px;top:875px;height:14px;line-height:14px;font-size:11.67px;color:#808080;font-family:'Liberation Mono', monospace;">2024-11-08 08:42:53</span><span class="t" style="left:1475.00px;top:875px;height:14px;line-height:14px;font-size:11.67px;color:#000;font-family:'Liberation Mono', monospace;">Analyzing orthomosaic...</span><span class="t" style="left:1335.00px;top:889px;height:14px;line-height:14px;font-size:11.67px;color:#808080;font-family:'Liberation Mono', monospace;">2024-11-08 08:43:02</span><span class="t" style="left:1475.00px;top:889px;height:14px;line-height:14px;font-size:11.67px;color:#000;font-family:'Liberation Mono', monospace;">Analyzing orthomosaic...</span><span class="t" style="left:1335.00px;top:903px;height:14px;line-height:14px;font-size:11.67px;color:#808080;font-family:'Liberation Mono', monospace;">2024-11-08 08:43:51</span><span class="t" style="left:1475.00px;top:903px;height:14px;line-height:14px;font-size:11.67px;color:#000;font-family:'Liberation Mono', monospace;">Analyzing orthomosaic...</span><span class="t" style="left:1335.00px;top:917px;height:14px;line-height:14px;font-size:11.67px;color:#808080;font-family:'Liberation Mono', monospace;">2024-11-08 08:43:55</span><span class="t" style="left:1475.00px;top:917px;height:14px;line-height:14px;font-size:11.67px;color:#000;font-family:'Liberation Mono', monospace;">Analyzing orthomosaic...</span><span class="t" style="left:1335.00px;top:931px;height:14px;line-height:14px;font-size:11.67px;color:#808080;font-family:'Liberation Mono', monospace;">2024-11-08 08:48:30</span><span class="t" style="left:1475.00px;top:931px;height:14px;line-height:14px;font-size:11.67px;color:#000;font-family:'Liberation Mono', monospace;">Analyzing orthomosaic...</span><span class="t" style="left:1335.00px;top:945px;height:14px;line-height:14px;font-size:11.67px;color:#808080;font-family:'Liberation Mono', monospace;">2024-11-08 08:54:25</span><span class="t" style="left:1475.00px;top:945px;height:14px;line-height:14px;font-size:11.67px;color:#000;font-family:'Liberation Mono', monospace;">Analyzing orthomosaic...</span><span class="t" style="left:1335.00px;top:959px;height:14px;line-height:14px;font-size:11.67px;color:#808080;font-family:'Liberation Mono', monospace;">2024-11-08 08:55:54</span><span class="t" style="left:1475.00px;top:959px;height:14px;line-height:14px;font-size:11.67px;color:#000;font-family:'Liberation Mono', monospace;">Analyzing orthomosaic...</span><span class="t" style="left:1335.00px;top:973px;height:14px;line-height:14px;font-size:11.67px;color:#808080;font-family:'Liberation Mono', monospace;">2024-11-08 09:00:15</span><span class="t" style="left:1475.00px;top:973px;height:14px;line-height:14px;font-size:11.67px;color:#000;font-family:'Liberation Mono', monospace;">Analyzing orthomosaic...</span><span class="t" style="left:1335.00px;top:987px;height:14px;line-height:14px;font-size:11.67px;color:#808080;font-family:'Liberation Mono', monospace;">&gt;&gt;&gt;</span><div style="position:absolute;left:1902px;top:762px;width:17px;height:255px;background:#f0f0f0"></div><div style="position:absolute;left:1902px;top:982px;width:17px;height:17px;background:#cdcdcd"></div><svg style="position:absolute;left:1906px;top:767px;" width="9" height="6" viewBox="0 0 9 6"><path d="M.500 5l4-4 4 4" fill="none" stroke="#404040" stroke-width="1.400"/></svg><svg style="position:absolute;left:1906px;top:1005px;" width="9" height="6" viewBox="0 0 9 6"><path d="M.500 1l4 4 4-4" fill="none" stroke="#404040" stroke-width="1.400"/></svg><svg style="position:absolute;left:1901px;top:1021px;" width="18" height="18" viewBox="0 0 18 18"><rect x="1" y="1" width="6" height="5" fill="#d8d8d8" stroke="#8a8a8a" stroke-width=".8"/><rect x="8.500" y="1" width="6" height="5" fill="#d8d8d8" stroke="#8a8a8a" stroke-width=".8"/><path d="M4 6v5.500h-3.500M4 11.500h6" stroke="#8a8a8a" stroke-width="1.200" fill="none"/><circle cx="12.500" cy="11.500" r="4" fill="#fff" stroke="#e02a1c" stroke-width="1.800"/><path d="M9.800 8.800l5.400 5.400" stroke="#e02a1c" stroke-width="1.800"/></svg>
<!-- dialog -->
<div style="position:absolute;left:35px;top:315px;width:563px;height:434px;background:#f0f0f0;border:1px solid #707070;box-sizing:border-box;box-shadow:0 4px 14px rgba(0,0,0,.3),0 0 10px rgba(0,0,0,.1)"></div><div style="position:absolute;left:36px;top:316px;width:561px;height:432px;border-right:1px solid #fbfbfb;border-bottom:1px solid #fbfbfb;box-sizing:border-box"></div><div style="position:absolute;left:36px;top:316px;width:561px;height:30px;background:#fff"></div><svg style="position:absolute;left:45px;top:322px;" width="15" height="15" viewBox="0 0 16 16"><rect x="1" y="0.5" width="14" height="15" fill="#5a5a5a"/><rect x="4" y="1.5" width="8" height="6" fill="#3aa0ea"/><rect x="4" y="8.5" width="8" height="6" fill="#3aa0ea"/><path d="M4 1.5h8v3c-3 0-5 1-8 2z" fill="#8fd0ff" opacity=".8"/><path d="M4 8.5h8v3c-3 0-5 1-8 2z" fill="#8fd0ff" opacity=".8"/><g fill="#d0d0d0"><rect x="1.7" y="1.5" width="1.4" height="1.6"/><rect x="1.7" y="4.5" width="1.4" height="1.6"/><rect x="1.7" y="7.5" width="1.4" height="1.6"/><rect x="1.7" y="10.5" width="1.4" height="1.6"/><rect x="1.7" y="13" width="1.4" height="1.6"/><rect x="12.9" y="1.5" width="1.4" height="1.6"/><rect x="12.9" y="4.5" width="1.4" height="1.6"/><rect x="12.9" y="7.5" width="1.4" height="1.6"/><rect x="12.9" y="10.5" width="1.4" height="1.6"/><rect x="12.9" y="13" width="1.4" height="1.6"/></g></svg><span class="t" style="left:65.00px;top:324px;height:14px;line-height:14px;font-size:12px;color:#000;letter-spacing:-0.068px;">Растровый калькулятор</span><svg style="position:absolute;left:576px;top:324px;" width="12" height="12" viewBox="0 0 12 12"><path d="M1 1l10 10M11 1L1 11" stroke="#000" stroke-width="1.100" fill="none"/></svg><div style="position:absolute;left:47px;top:378px;width:537px;height:329px;background:#fff;border:1px solid #d9d9d9;box-sizing:border-box"></div><div style="position:absolute;left:49px;top:359px;width:105px;height:19px;background:#f0f0f0;border:1px solid #d9d9d9;border-bottom:none;box-sizing:border-box"></div><div style="position:absolute;left:153px;top:357px;width:69px;height:22px;background:#fff;border:1px solid #d9d9d9;border-bottom:none;box-sizing:border-box"></div><span class="t" style="left:58.00px;top:363px;height:12px;line-height:12px;font-size:11px;color:#000;letter-spacing:-0.135px;">Преобразование</span><span class="t" style="left:166.00px;top:362px;height:12px;line-height:12px;font-size:11px;color:#000;letter-spacing:-0.125px;">Палитра</span><span class="t" style="left:58.00px;top:389px;height:12px;line-height:12px;font-size:11px;color:#000;letter-spacing:0.049px;">-0.237</span><span class="t" style="left:317.50px;top:389px;height:12px;line-height:12px;font-size:11px;color:#000;letter-spacing:0.194px;">0.264</span><svg style="position:absolute;left:0;top:0" width="620" height="760" viewBox="0 0 620 760"><defs><linearGradient id="hg" gradientUnits="userSpaceOnUse" x1="74" x2="345" y1="0" y2="0"><stop offset="0.0000" stop-color="#f0e4e0"/><stop offset="0.0369" stop-color="#d8c0b0"/><stop offset="0.0886" stop-color="#b89878"/><stop offset="0.1402" stop-color="#b0a060"/><stop offset="0.1919" stop-color="#a8a848"/><stop offset="0.2509" stop-color="#98ac28"/><stop offset="0.2878" stop-color="#90aa20"/><stop offset="0.3727" stop-color="#6c9a24"/><stop offset="0.4649" stop-color="#4c8c22"/><stop offset="0.5572" stop-color="#38842a"/><stop offset="0.6236" stop-color="#2c7c24"/><stop offset="0.6937" stop-color="#2c6422"/><stop offset="0.7786" stop-color="#2c4c22"/><stop offset="0.8524" stop-color="#2c3422"/><stop offset="0.9262" stop-color="#282420"/><stop offset="1.0000" stop-color="#080808"/></linearGradient></defs><rect x="64.500" y="401.500" width="304" height="252" fill="#fff" stroke="#000" stroke-width="1"/><rect x="74" y="402" width="259" height="251" fill="#ecdede"/><g stroke="#9a9a9a" stroke-width="1" stroke-dasharray="4 3" fill="none" opacity=".8"><path d="M93.5 402V653"/><path d="M145.5 402V653"/><path d="M196.5 402V653"/><path d="M248.5 402V653"/><path d="M299.5 402V653"/><path d="M351.5 402V653"/><path d="M65 445.5H368"/><path d="M65 497.5H368"/><path d="M65 548.5H368"/><path d="M65 600.5H368"/></g><polygon points="74.700,653 74.7,650.8 84.4,621.7 88,612 91.4,605 95,601 99.7,591 102,590 105.3,585.6 107.5,570 109.4,546.7 111.5,520 113.6,491 115,480 116.4,475.8 118,476 119.5,472 121.9,471.7 123.5,455 125.6,424.4 127,440 128.9,463.3 131,495 133,518.9 135,524 137.2,532.8 140,541 142.8,549.4 145,548 147,553 149,550 151,552 153,549 155,552 157,550 159.4,550.8 161,555 163,553 166.4,556.4 168,552 170,551 173.3,546.7 176,538 178.9,530 181,522 182,524 184.4,516 187,509 189,511 192.8,502 195,500 197,503 200,499 203.9,499.4 207,494 209,496 212,490 215,488.3 218,482 220,484 223,477 226,474.4 229,468 231,470 234.4,463.3 237,459 238.5,462 240,456.4 242,461 244,459 246,462 248.3,462 251,464 253,462 256.7,466 259,470 262.2,477 266,486 270.6,496.7 275,509 278.9,521.7 282,534 284.4,543.9 287,554 290,566 294,581 298.3,596.7 302,610 306.7,624.4 311,633 315,638.3 319,642 323.3,645.3 328,648 333,649.4 339,651 345.6,652.2 355,652.8 368,653 368,653" fill="url(#hg)"/><path d="M74.500 402V653M333 402V653" stroke="#d48c8c" stroke-width="1.600"/><path d="M64.500 653.500H369" stroke="#000"/></svg><span class="t" style="left:82.32px;top:655px;height:12px;line-height:12px;font-size:11px;color:#000;">-0.2</span><span class="t" style="left:133.82px;top:655px;height:12px;line-height:12px;font-size:11px;color:#000;">-0.1</span><span class="t" style="left:193.24px;top:655px;height:12px;line-height:12px;font-size:11px;color:#000;">0</span><span class="t" style="left:240.15px;top:655px;height:12px;line-height:12px;font-size:11px;color:#000;">0.1</span><span class="t" style="left:291.65px;top:655px;height:12px;line-height:12px;font-size:11px;color:#000;">0.2</span><span class="t" style="left:343.15px;top:655px;height:12px;line-height:12px;font-size:11px;color:#000;">0.3</span><span class="t" style="left:58.00px;top:678px;height:12px;line-height:12px;font-size:11px;color:#000;letter-spacing:0.017px;">Диапазон:</span><div style="position:absolute;left:117px;top:673px;width:60px;height:20px;background:#fff;border:1px solid #7a7a7a;box-sizing:border-box"></div><span class="t" style="left:120.00px;top:678px;height:12px;line-height:12px;font-size:11px;color:#000;letter-spacing:-0.061px;">-0.236919</span><span class="t" style="left:183.00px;top:678px;height:12px;line-height:12px;font-size:11px;color:#000;">-</span><div style="position:absolute;left:193px;top:673px;width:61px;height:20px;background:#fff;border:1px solid #7a7a7a;box-sizing:border-box"></div><span class="t" style="left:196.00px;top:678px;height:12px;line-height:12px;font-size:11px;color:#000;letter-spacing:0.014px;">0.263772</span><div style="position:absolute;left:261px;top:673px;width:73px;height:21px;background:#e1e1e1;border:2px solid #0078d7;box-sizing:border-box"></div><span class="t" style="left:284.75px;top:678px;height:12px;line-height:12px;font-size:11px;color:#000;letter-spacing:0.129px;">Авто</span><div style="position:absolute;left:352px;top:673px;width:21px;height:20px;background:#d6d6d6;border:1px solid #c0c0c0;box-sizing:border-box"></div><svg style="position:absolute;left:355px;top:675px;" width="16" height="16" viewBox="0 0 16 16"><path d="M3.500 12.500C1.500 8.500 3 4.500 7 3.200" fill="none" stroke="#2e7fc9" stroke-width="3.200"/><path d="M3.500 12.500C1.500 8.500 3 4.500 7 3.200" fill="none" stroke="#6ab4ee" stroke-width="1.800"/><path d="M6.300 .300l4.200 2.900-4.200 2.900z" fill="#58a6e6" stroke="#2e7fc9" stroke-width=".5"/><path d="M12.500 3.500C14.500 7.500 13 11.500 9 12.800" fill="none" stroke="#2e7fc9" stroke-width="3.200"/><path d="M12.500 3.500C14.500 7.500 13 11.500 9 12.800" fill="none" stroke="#6ab4ee" stroke-width="1.800"/><path d="M9.700 9.900l-4.200 2.900 4.200 2.900z" fill="#58a6e6" stroke="#2e7fc9" stroke-width=".5"/></svg><div style="position:absolute;left:380px;top:680px;width:13px;height:13px;background:#fff;border:1px solid #333;box-sizing:border-box"></div><svg style="position:absolute;left:380px;top:680px;" width="13" height="13" viewBox="0 0 13 13"><path d="M2.500 6.500l3 3 5-6" fill="none" stroke="#222" stroke-width="1.300"/></svg><span class="t" style="left:397.50px;top:681px;height:12px;line-height:12px;font-size:11px;color:#000;letter-spacing:0.095px;">Интерполировать цвета</span><span class="t" style="left:380.00px;top:393px;height:12px;line-height:12px;font-size:11px;color:#000;letter-spacing:0.049px;">Канал:</span><div style="position:absolute;left:421px;top:388px;width:123px;height:20px;background:#e5f1fb;border:1px solid #0078d7;box-sizing:border-box"></div><span class="t" style="left:425.00px;top:393px;height:12px;line-height:12px;font-size:11px;color:#000;">B3</span><svg style="position:absolute;left:530px;top:396px;" width="9" height="5" viewBox="0 0 9 5"><path d="M0 0h8l-4 4.500z" fill="#000"/></svg><div style="position:absolute;left:380px;top:414px;width:164px;height:20px;background:#e1e1e1;border:1px solid #adadad;box-sizing:border-box"></div><div style="position:absolute;left:385px;top:418px;width:64px;height:12px;background:linear-gradient(90deg,#0c1a5c 0%,#8c94b4 25%,#fff 48%,#c4aa82 55%,#8cb800 65%,#006400 80%,#000 100%)"></div><span class="t" style="left:451.50px;top:419px;height:12px;line-height:12px;font-size:11px;color:#000;letter-spacing:-0.695px;">NDVI</span><svg style="position:absolute;left:530px;top:422px;" width="9" height="5" viewBox="0 0 9 5"><path d="M0 0h8l-4 4.500z" fill="#000"/></svg><div style="position:absolute;left:380px;top:440px;width:164px;height:232px;background:#fff;border:1px solid #828790;box-sizing:border-box"></div><div style="position:absolute;left:385px;top:445px;width:32px;height:16px;background:#0c1a5c;border:1px solid #000;box-sizing:border-box"></div><span class="t" style="left:423.50px;top:448px;height:12px;line-height:12px;font-size:11px;color:#000;">-1</span><div style="position:absolute;left:385px;top:467px;width:32px;height:16px;background:#ffffff;border:1px solid #000;box-sizing:border-box"></div><span class="t" style="left:423.50px;top:470px;height:12px;line-height:12px;font-size:11px;color:#000;">0</span><div style="position:absolute;left:385px;top:489px;width:32px;height:16px;background:#c4aa82;border:1px solid #000;box-sizing:border-box"></div><span class="t" style="left:423.50px;top:492px;height:12px;line-height:12px;font-size:11px;color:#000;">0.1</span><div style="position:absolute;left:385px;top:511px;width:32px;height:16px;background:#8cb800;border:1px solid #000;box-sizing:border-box"></div><span class="t" style="left:423.50px;top:514px;height:12px;line-height:12px;font-size:11px;color:#000;">0.3</span><div style="position:absolute;left:385px;top:533px;width:32px;height:16px;background:#007000;border:1px solid #000;box-sizing:border-box"></div><span class="t" style="left:423.50px;top:536px;height:12px;line-height:12px;font-size:11px;color:#000;">0.6</span><div style="position:absolute;left:385px;top:555px;width:32px;height:16px;background:#000000;border:1px solid #000;box-sizing:border-box"></div><span class="t" style="left:423.50px;top:558px;height:12px;line-height:12px;font-size:11px;color:#000;">1</span><div style="position:absolute;left:551px;top:441px;width:21px;height:20px;background:#e1e1e1;border:1px solid #c4c4c4;box-sizing:border-box"></div><div style="position:absolute;left:551px;top:463px;width:21px;height:20px;background:#d0d0d0;border:1px solid #c4c4c4;box-sizing:border-box"></div><div style="position:absolute;left:551px;top:485px;width:21px;height:20px;background:#e1e1e1;border:1px solid #c4c4c4;box-sizing:border-box"></div><div style="position:absolute;left:551px;top:507px;width:21px;height:20px;background:#e1e1e1;border:1px solid #c4c4c4;box-sizing:border-box"></div><svg style="position:absolute;left:553.5px;top:443px;" width="16" height="16" viewBox="0 0 16 16"><circle cx="8" cy="8" r="6.500" fill="#6cc02a" stroke="#4a9a12"/><path d="M8 4.500v7M4.500 8h7" stroke="#fff" stroke-width="2"/></svg><svg style="position:absolute;left:553.5px;top:465px;" width="16" height="16" viewBox="0 0 16 16"><path d="M5 1.500h6l3.500 3.500v6l-3.500 3.500h-6l-3.500-3.500v-6z" fill="#b8b8b8" stroke="#a0a0a0"/><path d="M5.500 5.500l5 5M10.500 5.500l-5 5" stroke="#fff" stroke-width="2"/></svg><svg style="position:absolute;left:553.5px;top:487px;" width="16" height="16" viewBox="0 0 16 16"><path d="M1.5 13.5v-10h4l1.5 1.5h6v2" fill="#f9dc8c" stroke="#d99a2b"/><path d="M1.5 13.5l2.5-6h11l-2.5 6z" fill="#fbe9b0" stroke="#d99a2b"/></svg><svg style="position:absolute;left:553.5px;top:509px;" width="16" height="16" viewBox="0 0 16 16"><path d="M1.5 1.5h13v13h-11l-2-2z" fill="#3b9be0" stroke="#1f6fb5"/><rect x="3.5" y="2.5" width="9" height="5" fill="#e8f2fb"/><path d="M4.5 4h3M8.5 4h3M4.5 5.7h7" stroke="#7a9bb8" stroke-width=".8"/><rect x="5" y="10" width="6" height="4.5" fill="#e8f2fb"/><rect x="6" y="11" width="2" height="3" fill="#2a5f94"/></svg><div style="position:absolute;left:199px;top:715px;width:73px;height:21px;background:#e1e1e1;border:1px solid #adadad;box-sizing:border-box"></div><span class="t" style="left:228.00px;top:720px;height:12px;line-height:12px;font-size:11px;color:#000;letter-spacing:-0.953px;">OK</span><div style="position:absolute;left:280px;top:715px;width:73px;height:21px;background:#e1e1e1;border:1px solid #adadad;box-sizing:border-box"></div><span class="t" style="left:297.00px;top:720px;height:12px;line-height:12px;font-size:11px;color:#000;letter-spacing:-0.245px;">Отмена</span><div style="position:absolute;left:361px;top:715px;width:73px;height:21px;background:#cccccc;border:1px solid #bfbfbf;box-sizing:border-box"></div><span class="t" style="left:369.50px;top:720px;height:12px;line-height:12px;font-size:11px;color:#838383;letter-spacing:-0.205px;">Применить</span>
<!-- taskbar -->
<div style="position:absolute;left:0px;top:1040px;width:1920px;height:40px;background:linear-gradient(90deg,#233842 0%,#213540 30%,#1c2c3e 55%,#17253d 75%,#15223c 100%)"></div><svg style="position:absolute;left:16px;top:1052px;" width="17" height="17" viewBox="0 0 17 17"><path d="M0 2.400l6.800-1v6.700H0zM7.700 1.300L16.500 0v8.100H7.700zM0 9h6.800v6.700L0 14.700zM7.700 9h8.800v8.100l-8.800-1.300z" fill="#fff"/></svg><div style="position:absolute;left:48px;top:1040px;width:288px;height:40px;background:#f2f2f2;border:1px solid #d0d0d0;border-bottom:none;box-sizing:border-box"></div><svg style="position:absolute;left:59px;top:1051px;" width="18" height="18" viewBox="0 0 18 18"><circle cx="10.500" cy="6.500" r="5" fill="none" stroke="#222" stroke-width="1.400"/><path d="M7 10.500l-5.500 6" stroke="#222" stroke-width="1.400"/></svg><span class="t" style="left:88.00px;top:1052px;height:17px;line-height:17px;font-size:15px;color:#444;letter-spacing:0.253px;">Пошук</span><svg style="position:absolute;left:262px;top:1046px;overflow:hidden;" width="72" height="34" viewBox="262 1046 72 34"><defs><linearGradient id="lgA" x1="0" y1="0" x2="1" y2=".6"><stop offset="0" stop-color="#e8c880"/><stop offset=".35" stop-color="#a8b040"/><stop offset=".7" stop-color="#3f8420"/><stop offset="1" stop-color="#0f5014"/></linearGradient><linearGradient id="lgB" x1="0" y1="0" x2="1" y2=".5"><stop offset="0" stop-color="#e0c070"/><stop offset=".4" stop-color="#8ca838"/><stop offset=".8" stop-color="#2c741c"/><stop offset="1" stop-color="#0c4812"/></linearGradient><linearGradient id="lgC" x1="0" y1="0" x2="1" y2="1"><stop offset="0" stop-color="#c8c050"/><stop offset=".6" stop-color="#4c8c24"/><stop offset="1" stop-color="#145418"/></linearGradient></defs><path d="M271 1056l5.500-8 6 7 3-5.500 8 9-6 3z" fill="url(#lgC)"/><path d="M299 1057l6.500-7 3 3 6-5 5 6-8 7z" fill="url(#lgC)"/><path d="M272 1064l12-5 12-2.500 12 2.500 12 5v16h-48z" fill="#5c9428"/><path d="M263 1080c-1-8 0-16 3-22l5.500-6c6 6 12 12 20.500 13-6 2-14 5-18 15z" fill="url(#lgA)"/><path d="M303 1064c7-2 12-6 16.400-11.500l2 1.500 2 1 2 2 2 1.500c4 4 6 9 4.500 15-1 4-3 6-7 8h-18c2-6 6-10 4-13-1-2-5-3-8-5z" fill="url(#lgB)"/><path d="M296 1056.500l3 .5c-1 2-3 3-2 5 3 2 9 2 12 3 5 1 9 3 8 6-1 3-7 4-9 9h-35c0-6 6-10 12-12 4-1.500 8-2 9-4 .5-2-4-2-8-3-2-.5-3-2-1-2.500 3-.5 8 0 11-2z" fill="#a8dcf4"/><path d="M285 1060c3-.6 6 0 8 .5-1 1.200-5 1.200-8-.5zM279 1080c0-5 5-8 11-10-3 3-5 6-5 10zM296 1066c4 0 8 1 9 3-3 1-5 3-8 5-1-3-2-5-1-8zM300 1080c1-4 5-7 10-9 2 0 3-1 3-2-4 0-7 1-10 3-4 3-6 5-7 8z" fill="#2c3c88"/><path d="M286 1080c0-4 3-8 7-10 1 3 2 6 5 8l-2 2z" fill="#88e0e0"/></svg><svg style="position:absolute;left:351px;top:1050px;" width="18" height="18" viewBox="0 0 18 18"><path d="M1 2.500h11M1 15.500h11" stroke="#fff" stroke-width="1.200"/><rect x="1.600" y="5.600" width="10" height="7" fill="none" stroke="#fff" stroke-width="1.200"/><path d="M15 2v3M15 9v7" stroke="#fff" stroke-width="1.200"/><rect x="14" y="5.500" width="2.400" height="2.400" fill="#fff"/></svg><div style="position:absolute;left:485px;top:1040px;width:48px;height:40px;background:#45575f"></div><svg style="position:absolute;left:399px;top:1049px;" width="24" height="22" viewBox="0 0 24 22"><path d="M1 3.500c0-.8.500-1.500 1.500-1.500h6l2 2.500h11c.8 0 1.500.7 1.500 1.500v13c0 .8-.7 1.500-1.500 1.500h-19c-.8 0-1.500-.7-1.500-1.500z" fill="#f4b928"/><path d="M1 7h22v12c0 .8-.7 1.500-1.500 1.500h-19c-.8 0-1.500-.7-1.500-1.500z" fill="#fbd968"/><path d="M5 20.500v-6c0-.8.500-1.400 1.400-1.400h11.200c.9 0 1.400.6 1.400 1.400v6h-4v-4h-6v4z" fill="#3d8fe0"/></svg><svg style="position:absolute;left:447px;top:1048px;" width="25" height="25" viewBox="0 0 25 25"><defs><linearGradient id="eg1" x1="0" y1="0" x2="1" y2="1"><stop offset="0" stop-color="#35c1f1"/><stop offset=".5" stop-color="#1b9de2"/><stop offset="1" stop-color="#0f5fb8"/></linearGradient><linearGradient id="eg2" x1="0" y1="0" x2="1" y2="0"><stop offset="0" stop-color="#2fbfdf"/><stop offset="1" stop-color="#5fd04a"/></linearGradient></defs><circle cx="12.500" cy="12.500" r="12" fill="url(#eg1)"/><path d="M2 8C6-1 20-2 24 8c1.500 4-1 8-5 8-3 0-4-2-3-4-1-4-8-5-11 0-1.500 2-2 0-3-4z" fill="url(#eg2)"/><path d="M6 13c0 7 6 11 13 9-4 0-8-3-8-7 0-2 1-3 2-4-3-1-7-.5-7 2z" fill="#0c4fa0"/><path d="M13 11c-2 2-1 5 2 6 3 1 7 0 8-3-1 1-3 2-5 1.500s-2-2-1-3.500c-1-1-3-1.500-4-1z" fill="#1b7fd8" opacity=".7"/></svg><svg style="position:absolute;left:497px;top:1048px;" width="22" height="22" viewBox="0 0 16 16"><rect x="1" y="0.5" width="14" height="15" fill="#5a5a5a"/><rect x="4" y="1.5" width="8" height="6" fill="#3aa0ea"/><rect x="4" y="8.5" width="8" height="6" fill="#3aa0ea"/><path d="M4 1.5h8v3c-3 0-5 1-8 2z" fill="#8fd0ff" opacity=".8"/><path d="M4 8.5h8v3c-3 0-5 1-8 2z" fill="#8fd0ff" opacity=".8"/><g fill="#d0d0d0"><rect x="1.7" y="1.5" width="1.4" height="1.6"/><rect x="1.7" y="4.5" width="1.4" height="1.6"/><rect x="1.7" y="7.5" width="1.4" height="1.6"/><rect x="1.7" y="10.5" width="1.4" height="1.6"/><rect x="1.7" y="13" width="1.4" height="1.6"/><rect x="12.9" y="1.5" width="1.4" height="1.6"/><rect x="12.9" y="4.5" width="1.4" height="1.6"/><rect x="12.9" y="7.5" width="1.4" height="1.6"/><rect x="12.9" y="10.5" width="1.4" height="1.6"/><rect x="12.9" y="13" width="1.4" height="1.6"/></g></svg><svg style="position:absolute;left:546px;top:1049px;" width="23" height="21" viewBox="0 0 23 21"><rect x=".5" y="1" width="22" height="19" fill="#2e7fd0"/><rect x="2.500" y="3" width="18" height="15" fill="#bfe0f4"/><path d="M2.500 12c4-3 8 1 11-2s5-2 7-1v9h-18z" fill="#5a8a6a"/><path d="M2.500 15c5-2 10 1 18-1v4h-18z" fill="#d8e8f0" opacity=".7"/><path d="M2.500 3h18v5c-6 2-12-1-18 2z" fill="#8cc8f0"/><g fill="#7fc0f8"><rect x="0" y="0" width="3" height="3"/><rect x="20" y="0" width="3" height="3"/><rect x="0" y="18" width="3" height="3"/><rect x="20" y="18" width="3" height="3"/></g></svg><div style="position:absolute;left:391px;top:1078px;width:34px;height:2px;background:#76b9ed"></div><div style="position:absolute;left:440px;top:1078px;width:40px;height:2px;background:#76b9ed"></div><div style="position:absolute;left:485px;top:1078px;width:48px;height:2px;background:#76b9ed"></div><div style="position:absolute;left:538px;top:1078px;width:40px;height:2px;background:#76b9ed"></div><div style="position:absolute;left:425px;top:1078px;width:6px;height:2px;background:#5a8cb4"></div><svg style="position:absolute;left:1588px;top:1047px;" width="26" height="24" viewBox="0 0 25 24"><path d="M5 14a5 5 0 0 1 1.500-9.800A6.500 6.500 0 0 1 19 5.500 4.500 4.500 0 0 1 19.500 14z" fill="#b8c4d0"/><path d="M9 14a4 4 0 0 1 1-7.800 5 5 0 0 1 9.500.8A3.500 3.500 0 0 1 20 14z" fill="#8c9cb0" opacity=".75"/><path d="M1 17.500h11M14 17.500h10M1 21.500h23" stroke="#9ab0c8" stroke-width="1.800"/></svg><span class="t" style="left:1620.00px;top:1053px;height:16px;line-height:16px;font-size:14.5px;color:#fff;letter-spacing:-0.615px;">0°C</span><span class="t" style="left:1651.00px;top:1053px;height:16px;line-height:16px;font-size:14.5px;color:#fff;letter-spacing:-0.667px;">Fog</span><svg style="position:absolute;left:1698px;top:1055px;" width="14" height="9" viewBox="0 0 14 9"><path d="M1 8l6-6.500 6 6.500" fill="none" stroke="#fff" stroke-width="1.400"/></svg><svg style="position:absolute;left:1720px;top:1053px;" width="18" height="16" viewBox="0 0 18 16"><rect x="3.500" y="1.500" width="13" height="9" fill="none" stroke="#fff" stroke-width="1.200"/><path d="M10 10.500v3.500M5.500 14.500h9" stroke="#fff" stroke-width="1.200"/><rect x="1" y="1" width="3.600" height="3" fill="#15223c" stroke="#fff" stroke-width=".9"/><path d="M2.800 4v9.500h3" fill="none" stroke="#fff" stroke-width=".9"/></svg><svg style="position:absolute;left:1744px;top:1052px;" width="20" height="18" viewBox="0 0 20 18"><path d="M1.500 6.500h3l4-4v13l-4-4h-3z" fill="none" stroke="#fff" stroke-width="1.200"/><path d="M11 6.500c1.200 1.200 1.200 3.800 0 5M13.300 4.500c2.300 2.300 2.300 6.700 0 9M15.600 2.500c3.400 3.400 3.400 9.600 0 13" fill="none" stroke="#fff" stroke-width="1.100"/></svg><span class="t" style="left:1772.00px;top:1054px;height:14px;line-height:14px;font-size:12px;color:#fff;letter-spacing:-0.542px;">УКР</span><span class="t" style="left:1823.50px;top:1044px;height:14px;line-height:14px;font-size:12px;color:#fff;letter-spacing:-0.840px;">9:01</span><span class="t" style="left:1807.00px;top:1062px;height:14px;line-height:14px;font-size:12px;color:#fff;letter-spacing:-0.517px;">08.11.2024</span><div style="position:absolute;left:1915px;top:1040px;width:1px;height:40px;background:#5a6878"></div><svg style="position:absolute;left:1878px;top:1051px;" width="26" height="26" viewBox="0 0 26 26"><path d="M1.500 1.500h15v12h-9l-3.500 3.500v-3.500h-2.500z" fill="#fff"/><path d="M4 5h10M4 7.500h10M4 10h10" stroke="#15223c" stroke-width="1"/><circle cx="16.500" cy="15.500" r="7" fill="#3a3f48" stroke="#15223c" stroke-width="1"/></svg><span class="t" style="left:1891.16px;top:1060px;height:14px;line-height:14px;font-size:12px;color:#fff;font-weight:700;">1</span>
</body></html>
